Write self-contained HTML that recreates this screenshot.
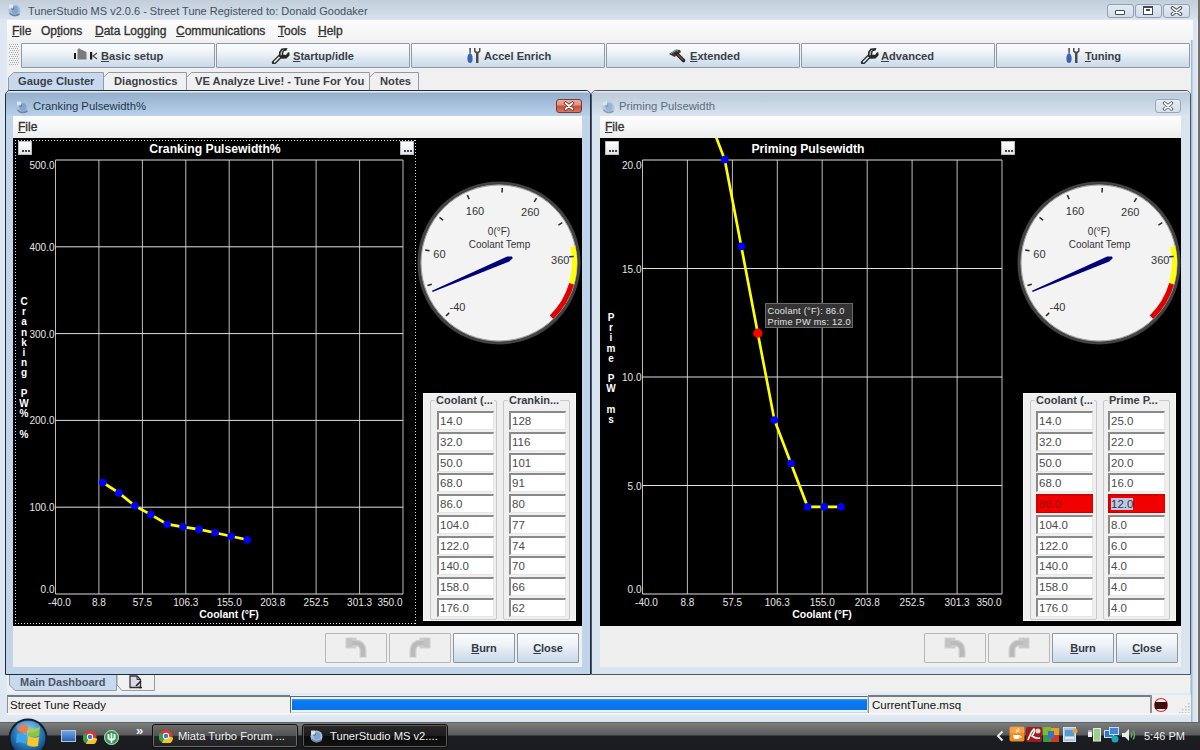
<!DOCTYPE html><html><head><meta charset="utf-8"><style>
*{box-sizing:border-box;margin:0;padding:0}
html,body{width:1200px;height:750px;overflow:hidden;background:#f0f0f0;font-family:"Liberation Sans",sans-serif;}
.a{position:absolute}
.u{text-decoration:underline;text-underline-offset:1px;text-decoration-thickness:1px}
.menu{top:24px;font-size:12px;color:#333;white-space:nowrap;-webkit-text-stroke:0.35px #333}
.tbtn{top:43px;height:25px;border:1px solid #8e9aa6;border-radius:1px;background:linear-gradient(#fafcfe 0%,#f0f4f8 35%,#dde7f1 65%,#c9d9ea 100%);font-weight:bold;font-size:11px;color:#3a3f46;line-height:23px;white-space:nowrap}
.tab{top:72px;height:19px;font-weight:bold;font-size:11px;color:#3a3f46;line-height:18px;white-space:nowrap}
.wmenu{font-size:12px;color:#333;white-space:nowrap;-webkit-text-stroke:0.35px #333}
.btn{top:633px;height:30px;border:1px solid #8a96a2;border-radius:1px;font-weight:bold;font-size:11px;letter-spacing:-0.1px;color:#333a42;text-align:center;line-height:29px;background:linear-gradient(#fafcfe 0%,#f0f4f8 35%,#dde7f1 65%,#c9d9ea 100%)}
.btnd{background:#efefef;border-color:#b4b8bc}
.cell{height:19px;background:#fff;border-top:2px solid #8a8a8a;border-left:2px solid #8a8a8a;border-right:1px solid #e6e6e6;border-bottom:1px solid #e6e6e6;font-size:11.5px;color:#4a4a4a;line-height:16px;padding-left:1px;white-space:nowrap;overflow:hidden}
.gb{border:1px solid #c9c9c9;border-radius:2px}
.gt{font-size:11px;font-weight:bold;color:#3a3f46;background:#efefef;white-space:nowrap;padding:0 1px}
.tw{font-family:"Liberation Sans",sans-serif}
</style></head><body>
<div class="a" style="left:0;top:0;width:1200px;height:20px;background:linear-gradient(#c2cfdb,#d0dce8 14px,#d6e2ec 19px,#e6edf3 20px)"></div>
<svg class="a" style="left:6px;top:2px;opacity:1" width="16" height="16" viewBox="0 0 16 16"><ellipse cx="8.5" cy="8.5" rx="6" ry="6" fill="#a9c0dc"/><ellipse cx="9" cy="8" rx="3.5" ry="4" fill="#7ea3d6"/><path d="M3.5 11 Q8 15.5 13.5 12" stroke="#6f7f95" stroke-width="1.6" fill="none"/><circle cx="6.5" cy="6.5" r="1.3" fill="#55677f"/><rect x="3" y="2.5" width="4" height="4" fill="#e6ece6" opacity="0.9"/></svg>
<div class="a" style="left:28px;top:5px;font-size:11px;color:#46505c;white-space:nowrap">TunerStudio MS v2.0.6 - Street Tune Registered to: Donald Goodaker</div>
<div class="a" style="left:1107px;top:4px;width:27px;height:14px;border:1px solid #93a1b0;border-radius:3px;background:linear-gradient(#e3eaf2,#d2dde9)"></div>
<div class="a" style="left:1135px;top:4px;width:27px;height:14px;border:1px solid #93a1b0;border-radius:3px;background:linear-gradient(#e3eaf2,#d2dde9)"></div>
<div class="a" style="left:1163px;top:4px;width:27px;height:14px;border:1px solid #93a1b0;border-radius:3px;background:linear-gradient(#e3eaf2,#d2dde9)"></div>
<div class="a" style="left:1115px;top:10px;width:10px;height:5px;border:1px solid #3e4a58;border-radius:1px;background:#fff"></div>
<div class="a" style="left:1143px;top:6px;width:10px;height:9px;border:1px solid #3e4a58;border-top-width:2px;background:#fff"><div style="margin:1px 2px;width:4px;height:2px;background:#3e4a58"></div></div>
<svg class="a" style="left:1170px;top:6px" width="13" height="10" viewBox="0 0 13 10"><path d="M2.5 1.8 L10.5 8.2 M10.5 1.8 L2.5 8.2" stroke="#3e4a58" stroke-width="3.4" stroke-linecap="round"/><path d="M2.5 1.8 L10.5 8.2 M10.5 1.8 L2.5 8.2" stroke="#fff" stroke-width="1.6" stroke-linecap="round"/></svg>
<div class="a" style="left:0;top:20px;width:7px;height:702px;background:#dde8f3"></div>
<div class="a" style="left:1191px;top:20px;width:9px;height:702px;background:linear-gradient(to right,#aab8c8 0px,#aab8c8 1px,#d8e6f4 2px,#d8e6f4 6px,#f4f4f4 7px)"></div>
<div class="a" style="left:1198px;top:0px;width:2px;height:722px;background:#77706a"></div>
<div class="a" style="left:7px;top:20px;width:1186px;height:20px;background:linear-gradient(#fcfcfc,#f4f4f4)"></div>
<div class="a menu" style="left:12px"><span class="u">F</span>ile</div>
<div class="a menu" style="left:41px">Op<span class="u">t</span>ions</div>
<div class="a menu" style="left:95px"><span class="u">D</span>ata Logging</div>
<div class="a menu" style="left:176px"><span class="u">C</span>ommunications</div>
<div class="a menu" style="left:278px"><span class="u">T</span>ools</div>
<div class="a menu" style="left:318px"><span class="u">H</span>elp</div>
<svg class="a" style="left:9px;top:44px" width="11" height="23"><rect x="0" y="0" width="1" height="1" fill="#a8aeb6"/><rect x="1" y="2" width="1" height="1" fill="#a8aeb6"/><rect x="0" y="4" width="1" height="1" fill="#a8aeb6"/><rect x="1" y="6" width="1" height="1" fill="#a8aeb6"/><rect x="0" y="8" width="1" height="1" fill="#a8aeb6"/><rect x="1" y="10" width="1" height="1" fill="#a8aeb6"/><rect x="0" y="12" width="1" height="1" fill="#a8aeb6"/><rect x="1" y="14" width="1" height="1" fill="#a8aeb6"/><rect x="0" y="16" width="1" height="1" fill="#a8aeb6"/><rect x="1" y="18" width="1" height="1" fill="#a8aeb6"/><rect x="0" y="20" width="1" height="1" fill="#a8aeb6"/><rect x="2" y="0" width="1" height="1" fill="#a8aeb6"/><rect x="3" y="2" width="1" height="1" fill="#a8aeb6"/><rect x="2" y="4" width="1" height="1" fill="#a8aeb6"/><rect x="3" y="6" width="1" height="1" fill="#a8aeb6"/><rect x="2" y="8" width="1" height="1" fill="#a8aeb6"/><rect x="3" y="10" width="1" height="1" fill="#a8aeb6"/><rect x="2" y="12" width="1" height="1" fill="#a8aeb6"/><rect x="3" y="14" width="1" height="1" fill="#a8aeb6"/><rect x="2" y="16" width="1" height="1" fill="#a8aeb6"/><rect x="3" y="18" width="1" height="1" fill="#a8aeb6"/><rect x="2" y="20" width="1" height="1" fill="#a8aeb6"/><rect x="4" y="0" width="1" height="1" fill="#a8aeb6"/><rect x="5" y="2" width="1" height="1" fill="#a8aeb6"/><rect x="4" y="4" width="1" height="1" fill="#a8aeb6"/><rect x="5" y="6" width="1" height="1" fill="#a8aeb6"/><rect x="4" y="8" width="1" height="1" fill="#a8aeb6"/><rect x="5" y="10" width="1" height="1" fill="#a8aeb6"/><rect x="4" y="12" width="1" height="1" fill="#a8aeb6"/><rect x="5" y="14" width="1" height="1" fill="#a8aeb6"/><rect x="4" y="16" width="1" height="1" fill="#a8aeb6"/><rect x="5" y="18" width="1" height="1" fill="#a8aeb6"/><rect x="4" y="20" width="1" height="1" fill="#a8aeb6"/><rect x="6" y="0" width="1" height="1" fill="#a8aeb6"/><rect x="7" y="2" width="1" height="1" fill="#a8aeb6"/><rect x="6" y="4" width="1" height="1" fill="#a8aeb6"/><rect x="7" y="6" width="1" height="1" fill="#a8aeb6"/><rect x="6" y="8" width="1" height="1" fill="#a8aeb6"/><rect x="7" y="10" width="1" height="1" fill="#a8aeb6"/><rect x="6" y="12" width="1" height="1" fill="#a8aeb6"/><rect x="7" y="14" width="1" height="1" fill="#a8aeb6"/><rect x="6" y="16" width="1" height="1" fill="#a8aeb6"/><rect x="7" y="18" width="1" height="1" fill="#a8aeb6"/><rect x="6" y="20" width="1" height="1" fill="#a8aeb6"/><rect x="8" y="0" width="1" height="1" fill="#a8aeb6"/><rect x="9" y="2" width="1" height="1" fill="#a8aeb6"/><rect x="8" y="4" width="1" height="1" fill="#a8aeb6"/><rect x="9" y="6" width="1" height="1" fill="#a8aeb6"/><rect x="8" y="8" width="1" height="1" fill="#a8aeb6"/><rect x="9" y="10" width="1" height="1" fill="#a8aeb6"/><rect x="8" y="12" width="1" height="1" fill="#a8aeb6"/><rect x="9" y="14" width="1" height="1" fill="#a8aeb6"/><rect x="8" y="16" width="1" height="1" fill="#a8aeb6"/><rect x="9" y="18" width="1" height="1" fill="#a8aeb6"/><rect x="8" y="20" width="1" height="1" fill="#a8aeb6"/></svg>
<div class="a tbtn" style="left:21px;width:194px"></div>
<div class="a" style="left:101px;top:50px;font-weight:bold;font-size:11.1px;color:#3a3f46;white-space:nowrap"><span class="u">B</span>asic setup</div>
<div class="a tbtn" style="left:216px;width:194px"></div>
<div class="a" style="left:293px;top:50px;font-weight:bold;font-size:11.1px;color:#3a3f46;white-space:nowrap"><span class="u">S</span>tartup/idle</div>
<div class="a tbtn" style="left:411px;width:194px"></div>
<div class="a" style="left:484px;top:50px;font-weight:bold;font-size:11.1px;color:#3a3f46;white-space:nowrap">Accel Enrich</div>
<div class="a tbtn" style="left:606px;width:194px"></div>
<div class="a" style="left:690px;top:50px;font-weight:bold;font-size:11.1px;color:#3a3f46;white-space:nowrap"><span class="u">E</span>xtended</div>
<div class="a tbtn" style="left:801px;width:194px"></div>
<div class="a" style="left:881px;top:50px;font-weight:bold;font-size:11.1px;color:#3a3f46;white-space:nowrap"><span class="u">A</span>dvanced</div>
<div class="a tbtn" style="left:996px;width:194px"></div>
<div class="a" style="left:1085px;top:50px;font-weight:bold;font-size:11.1px;color:#3a3f46;white-space:nowrap"><span class="u">T</span>uning</div>
<svg class="a" style="left:72px;top:46px" width="28" height="16"><rect x="2" y="7" width="2" height="6" fill="#1a1a1a"/><path d="M5.5 13.5 L5.5 4 L7 2 L8 3 L14.5 6 L14.5 13.5Z" fill="#7a7a7a"/><rect x="18" y="6" width="2.2" height="7.5" fill="#1a1a1a"/><path d="M25 7 L21 10 L25 13" stroke="#444" stroke-width="1.1" fill="none"/></svg>
<svg class="a" style="left:271px;top:46px" width="22" height="18" viewBox="0 0 22 18"><path d="M3 16.5 L9.5 10" stroke="#2a2a2a" stroke-width="4.2" stroke-linecap="round"/><path d="M3.6 15.9 L9.5 10" stroke="#e4e4e4" stroke-width="1.6" stroke-linecap="round"/><path d="M8 10.5 L8 6 L10.5 2.5 L16.5 2 L15.5 4.5 L12.8 5.2 L12 8.5 L15 9 L17 6.3 L18.5 6.5 L18.5 9.5 L15.5 12.5 L10.5 12.8Z" fill="#262626"/><path d="M9.5 9.5 L9.6 6.5 L11.2 4 L13 3.6 L11.3 5.2 L10.8 9Z" fill="#bdbdbd"/></svg>
<svg class="a" style="left:860px;top:46px" width="22" height="18" viewBox="0 0 22 18"><path d="M3 16.5 L9.5 10" stroke="#2a2a2a" stroke-width="4.2" stroke-linecap="round"/><path d="M3.6 15.9 L9.5 10" stroke="#e4e4e4" stroke-width="1.6" stroke-linecap="round"/><path d="M8 10.5 L8 6 L10.5 2.5 L16.5 2 L15.5 4.5 L12.8 5.2 L12 8.5 L15 9 L17 6.3 L18.5 6.5 L18.5 9.5 L15.5 12.5 L10.5 12.8Z" fill="#262626"/><path d="M9.5 9.5 L9.6 6.5 L11.2 4 L13 3.6 L11.3 5.2 L10.8 9Z" fill="#bdbdbd"/></svg>
<svg class="a" style="left:467px;top:46px" width="16" height="18" viewBox="0 0 16 18"><path d="M2.2 2 L4 2 L3.8 7 L2.4 7Z" fill="#555"/><path d="M3 7 Q5.6 8 5.6 12.5 Q5.6 17 3 17 Q0.4 17 0.4 12.5 Q0.4 8 3 7Z" fill="#3d63b5"/><path d="M7 2 L7 5.5 L9 7.5 L9 17 L11.5 17 L11.5 7.5 L13.5 5.5 L13.5 2 L12 2 L12 5 L10.2 5.8 L8.5 5 L8.5 2Z" fill="#4a4a4a"/></svg>
<svg class="a" style="left:1066px;top:46px" width="16" height="18" viewBox="0 0 16 18"><path d="M2.2 2 L4 2 L3.8 7 L2.4 7Z" fill="#555"/><path d="M3 7 Q5.6 8 5.6 12.5 Q5.6 17 3 17 Q0.4 17 0.4 12.5 Q0.4 8 3 7Z" fill="#3d63b5"/><path d="M7 2 L7 5.5 L9 7.5 L9 17 L11.5 17 L11.5 7.5 L13.5 5.5 L13.5 2 L12 2 L12 5 L10.2 5.8 L8.5 5 L8.5 2Z" fill="#4a4a4a"/></svg>
<svg class="a" style="left:667px;top:48px" width="20" height="16" viewBox="0 0 20 16"><path d="M2 6 L9 1.5 L13 2 L14 4 L7.5 9Z" fill="#3c3c3c"/><path d="M4 5.5 L9 2.5 L11 3" stroke="#999" stroke-width="1" fill="none"/><path d="M10 6 L16.5 12.5" stroke="#222" stroke-width="3.6" stroke-linecap="round"/><path d="M10.2 6.2 L16.3 12.3" stroke="#8a4a44" stroke-width="1.4"/></svg>
<svg class="a" style="left:8px;top:72px" width="97" height="19"><path d="M0.5 19 L0.5 5.5 L5.5 0.5 L95.5 0.5 L95.5 19" fill="#c6d9ee" stroke="#8f9aa6"/></svg>
<svg class="a" style="left:103px;top:72px" width="85" height="19"><path d="M0.5 19 L0.5 5.5 L5.5 0.5 L83.5 0.5 L83.5 19" fill="#f0f0f0" stroke="#8f9aa6"/></svg>
<svg class="a" style="left:186px;top:72px" width="185" height="19"><path d="M0.5 19 L0.5 5.5 L5.5 0.5 L183.5 0.5 L183.5 19" fill="#f0f0f0" stroke="#8f9aa6"/></svg>
<svg class="a" style="left:369px;top:72px" width="51" height="19"><path d="M0.5 19 L0.5 5.5 L5.5 0.5 L49.5 0.5 L49.5 19" fill="#f0f0f0" stroke="#8f9aa6"/></svg>
<div class="a tab" style="left:18px;font-size:11.2px">Gauge Cluster</div>
<div class="a tab" style="left:114px;font-size:11.2px">Diagnostics</div>
<div class="a tab" style="left:195px;font-size:11.2px">VE Analyze Live! - Tune For You</div>
<div class="a tab" style="left:380px;font-size:11.2px">Notes</div>
<div class="a" style="left:5px;top:90px;width:586px;height:585px;border:1px solid #1d2a38;border-radius:5px 5px 0 0;background:#c0d4ea"></div>
<div class="a" style="left:6px;top:91px;width:584px;height:25px;border-radius:4px 4px 0 0;background:linear-gradient(#e6eef6 0px,#e6eef6 1px,#96b0cb 2px,#a4bed9 12px,#b5cde9 23px,#bcd2ea 25px)"></div>
<div class="a" style="left:591px;top:90px;width:600px;height:585px;border:1px solid #4e5864;border-radius:5px 5px 0 0;background:#d8e5f1"></div>
<div class="a" style="left:592px;top:91px;width:598px;height:25px;border-radius:4px 4px 0 0;background:linear-gradient(#e2e8ee 0px,#e2e8ee 1px,#c0cbd6 2px,#c4d3e2 10px,#d5e0ee 22px,#dae5f0 25px)"></div>
<svg class="a" style="left:14px;top:99px;opacity:0.95" width="16" height="16" viewBox="0 0 16 16"><ellipse cx="8.5" cy="8.5" rx="6" ry="6" fill="#a9c0dc"/><ellipse cx="9" cy="8" rx="3.5" ry="4" fill="#7ea3d6"/><path d="M3.5 11 Q8 15.5 13.5 12" stroke="#6f7f95" stroke-width="1.6" fill="none"/><circle cx="6.5" cy="6.5" r="1.3" fill="#55677f"/><rect x="3" y="2.5" width="4" height="4" fill="#e6ece6" opacity="0.9"/></svg>
<div class="a" style="left:33px;top:100px;font-size:11.3px;color:#24364c;white-space:nowrap">Cranking Pulsewidth%</div>
<div class="a" style="left:556px;top:99px;width:26px;height:14px;border:1px solid #7a3a30;border-radius:3px;background:linear-gradient(#eab0a4 0%,#e0907e 40%,#c9503c 55%,#d47a66 100%)"></div><svg class="a" style="left:563px;top:101px" width="12" height="10"><path d="M2.5 2 L9.5 8 M9.5 2 L2.5 8" stroke="#6a2a20" stroke-width="3.4" stroke-linecap="round"/><path d="M2.5 2 L9.5 8 M9.5 2 L2.5 8" stroke="#fff" stroke-width="1.8" stroke-linecap="round"/></svg>
<div class="a" style="left:13px;top:116px;width:569px;height:22px;background:linear-gradient(#fdfdfd 0%,#f7f7f7 50%,#ececec 100%)"></div>
<div class="a wmenu" style="left:18px;top:120px"><span class="u">F</span>ile</div>
<div class="a" style="left:13px;top:626px;width:569px;height:41px;background:#efefef"></div>
<svg class="a" style="left:13px;top:138px" width="569" height="488" viewBox="13 138 569 488" font-family="Liberation Sans, sans-serif"><rect x="13" y="138" width="569" height="488" fill="#000"/><line x1="55.5" y1="160" x2="55.5" y2="594" stroke="#bdbdbd" stroke-width="1"/><text x="59.5" y="606" fill="#e6e6e6" font-size="10" text-anchor="middle">-40.0</text><line x1="98.9" y1="160" x2="98.9" y2="594" stroke="#bdbdbd" stroke-width="1"/><text x="98.9" y="606" fill="#e6e6e6" font-size="10" text-anchor="middle">8.8</text><line x1="142.4" y1="160" x2="142.4" y2="594" stroke="#bdbdbd" stroke-width="1"/><text x="142.4" y="606" fill="#e6e6e6" font-size="10" text-anchor="middle">57.5</text><line x1="185.8" y1="160" x2="185.8" y2="594" stroke="#bdbdbd" stroke-width="1"/><text x="185.8" y="606" fill="#e6e6e6" font-size="10" text-anchor="middle">106.3</text><line x1="229.2" y1="160" x2="229.2" y2="594" stroke="#bdbdbd" stroke-width="1"/><text x="229.2" y="606" fill="#e6e6e6" font-size="10" text-anchor="middle">155.0</text><line x1="272.7" y1="160" x2="272.7" y2="594" stroke="#bdbdbd" stroke-width="1"/><text x="272.7" y="606" fill="#e6e6e6" font-size="10" text-anchor="middle">203.8</text><line x1="316.1" y1="160" x2="316.1" y2="594" stroke="#bdbdbd" stroke-width="1"/><text x="316.1" y="606" fill="#e6e6e6" font-size="10" text-anchor="middle">252.5</text><line x1="359.6" y1="160" x2="359.6" y2="594" stroke="#bdbdbd" stroke-width="1"/><text x="359.6" y="606" fill="#e6e6e6" font-size="10" text-anchor="middle">301.3</text><line x1="403.0" y1="160" x2="403.0" y2="594" stroke="#bdbdbd" stroke-width="1"/><text x="390.0" y="606" fill="#e6e6e6" font-size="10" text-anchor="middle">350.0</text><line x1="55.5" y1="594.0" x2="403" y2="594.0" stroke="#e0e0e0" stroke-width="1"/><text x="54.5" y="593.0" fill="#e6e6e6" font-size="10" text-anchor="end">0.0</text><line x1="55.5" y1="507.2" x2="403" y2="507.2" stroke="#e0e0e0" stroke-width="1"/><text x="54.5" y="511.2" fill="#e6e6e6" font-size="10" text-anchor="end">100.0</text><line x1="55.5" y1="420.4" x2="403" y2="420.4" stroke="#e0e0e0" stroke-width="1"/><text x="54.5" y="424.4" fill="#e6e6e6" font-size="10" text-anchor="end">200.0</text><line x1="55.5" y1="333.6" x2="403" y2="333.6" stroke="#e0e0e0" stroke-width="1"/><text x="54.5" y="337.6" fill="#e6e6e6" font-size="10" text-anchor="end">300.0</text><line x1="55.5" y1="246.8" x2="403" y2="246.8" stroke="#e0e0e0" stroke-width="1"/><text x="54.5" y="250.8" fill="#e6e6e6" font-size="10" text-anchor="end">400.0</text><line x1="55.5" y1="160.0" x2="403" y2="160.0" stroke="#e0e0e0" stroke-width="1"/><text x="54.5" y="169.0" fill="#e6e6e6" font-size="10" text-anchor="end">500.0</text><text x="215" y="152.8" fill="#fff" font-size="12.2" font-weight="bold" text-anchor="middle">Cranking Pulsewidth%</text><text x="229" y="618" fill="#fff" font-size="10.5" font-weight="bold" text-anchor="middle">Coolant (°F)</text><text x="24" y="305.0" fill="#fff" font-size="10" font-weight="bold" text-anchor="middle">C</text><text x="24" y="315.2" fill="#fff" font-size="10" font-weight="bold" text-anchor="middle">r</text><text x="24" y="325.4" fill="#fff" font-size="10" font-weight="bold" text-anchor="middle">a</text><text x="24" y="335.6" fill="#fff" font-size="10" font-weight="bold" text-anchor="middle">n</text><text x="24" y="345.8" fill="#fff" font-size="10" font-weight="bold" text-anchor="middle">k</text><text x="24" y="356.0" fill="#fff" font-size="10" font-weight="bold" text-anchor="middle">i</text><text x="24" y="366.2" fill="#fff" font-size="10" font-weight="bold" text-anchor="middle">n</text><text x="24" y="376.4" fill="#fff" font-size="10" font-weight="bold" text-anchor="middle">g</text><text x="24" y="396.8" fill="#fff" font-size="10" font-weight="bold" text-anchor="middle">P</text><text x="24" y="407.0" fill="#fff" font-size="10" font-weight="bold" text-anchor="middle">W</text><text x="24" y="417.2" fill="#fff" font-size="10" font-weight="bold" text-anchor="middle">%</text><text x="24" y="437.6" fill="#fff" font-size="10" font-weight="bold" text-anchor="middle">%</text><clipPath id="c13"><rect x="13" y="138" width="569" height="488"/></clipPath><polyline clip-path="url(#c13)" points="102.8,482.5 118.9,492.9 134.9,505.9 150.9,514.6 167.0,524.2 183.0,526.8 199.0,529.4 215.1,532.8 231.1,536.3 247.2,539.8" fill="none" stroke="#ffff00" stroke-width="2.7"/><circle cx="102.8" cy="482.5" r="3.8" fill="#0000ff"/><circle cx="118.9" cy="492.9" r="3.8" fill="#0000ff"/><circle cx="134.9" cy="505.9" r="3.8" fill="#0000ff"/><circle cx="150.9" cy="514.6" r="3.8" fill="#0000ff"/><circle cx="167.0" cy="524.2" r="3.8" fill="#0000ff"/><circle cx="183.0" cy="526.8" r="3.8" fill="#0000ff"/><circle cx="199.0" cy="529.4" r="3.8" fill="#0000ff"/><circle cx="215.1" cy="532.8" r="3.8" fill="#0000ff"/><circle cx="231.1" cy="536.3" r="3.8" fill="#0000ff"/><circle cx="247.2" cy="539.8" r="3.8" fill="#0000ff"/><rect x="15" y="140" width="1" height="1" fill="#e0e0e0"/><rect x="15" y="623" width="1" height="1" fill="#e0e0e0"/><rect x="18" y="140" width="1" height="1" fill="#e0e0e0"/><rect x="18" y="623" width="1" height="1" fill="#e0e0e0"/><rect x="21" y="140" width="1" height="1" fill="#e0e0e0"/><rect x="21" y="623" width="1" height="1" fill="#e0e0e0"/><rect x="24" y="140" width="1" height="1" fill="#e0e0e0"/><rect x="24" y="623" width="1" height="1" fill="#e0e0e0"/><rect x="27" y="140" width="1" height="1" fill="#e0e0e0"/><rect x="27" y="623" width="1" height="1" fill="#e0e0e0"/><rect x="30" y="140" width="1" height="1" fill="#e0e0e0"/><rect x="30" y="623" width="1" height="1" fill="#e0e0e0"/><rect x="33" y="140" width="1" height="1" fill="#e0e0e0"/><rect x="33" y="623" width="1" height="1" fill="#e0e0e0"/><rect x="36" y="140" width="1" height="1" fill="#e0e0e0"/><rect x="36" y="623" width="1" height="1" fill="#e0e0e0"/><rect x="39" y="140" width="1" height="1" fill="#e0e0e0"/><rect x="39" y="623" width="1" height="1" fill="#e0e0e0"/><rect x="42" y="140" width="1" height="1" fill="#e0e0e0"/><rect x="42" y="623" width="1" height="1" fill="#e0e0e0"/><rect x="45" y="140" width="1" height="1" fill="#e0e0e0"/><rect x="45" y="623" width="1" height="1" fill="#e0e0e0"/><rect x="48" y="140" width="1" height="1" fill="#e0e0e0"/><rect x="48" y="623" width="1" height="1" fill="#e0e0e0"/><rect x="51" y="140" width="1" height="1" fill="#e0e0e0"/><rect x="51" y="623" width="1" height="1" fill="#e0e0e0"/><rect x="54" y="140" width="1" height="1" fill="#e0e0e0"/><rect x="54" y="623" width="1" height="1" fill="#e0e0e0"/><rect x="57" y="140" width="1" height="1" fill="#e0e0e0"/><rect x="57" y="623" width="1" height="1" fill="#e0e0e0"/><rect x="60" y="140" width="1" height="1" fill="#e0e0e0"/><rect x="60" y="623" width="1" height="1" fill="#e0e0e0"/><rect x="63" y="140" width="1" height="1" fill="#e0e0e0"/><rect x="63" y="623" width="1" height="1" fill="#e0e0e0"/><rect x="66" y="140" width="1" height="1" fill="#e0e0e0"/><rect x="66" y="623" width="1" height="1" fill="#e0e0e0"/><rect x="69" y="140" width="1" height="1" fill="#e0e0e0"/><rect x="69" y="623" width="1" height="1" fill="#e0e0e0"/><rect x="72" y="140" width="1" height="1" fill="#e0e0e0"/><rect x="72" y="623" width="1" height="1" fill="#e0e0e0"/><rect x="75" y="140" width="1" height="1" fill="#e0e0e0"/><rect x="75" y="623" width="1" height="1" fill="#e0e0e0"/><rect x="78" y="140" width="1" height="1" fill="#e0e0e0"/><rect x="78" y="623" width="1" height="1" fill="#e0e0e0"/><rect x="81" y="140" width="1" height="1" fill="#e0e0e0"/><rect x="81" y="623" width="1" height="1" fill="#e0e0e0"/><rect x="84" y="140" width="1" height="1" fill="#e0e0e0"/><rect x="84" y="623" width="1" height="1" fill="#e0e0e0"/><rect x="87" y="140" width="1" height="1" fill="#e0e0e0"/><rect x="87" y="623" width="1" height="1" fill="#e0e0e0"/><rect x="90" y="140" width="1" height="1" fill="#e0e0e0"/><rect x="90" y="623" width="1" height="1" fill="#e0e0e0"/><rect x="93" y="140" width="1" height="1" fill="#e0e0e0"/><rect x="93" y="623" width="1" height="1" fill="#e0e0e0"/><rect x="96" y="140" width="1" height="1" fill="#e0e0e0"/><rect x="96" y="623" width="1" height="1" fill="#e0e0e0"/><rect x="99" y="140" width="1" height="1" fill="#e0e0e0"/><rect x="99" y="623" width="1" height="1" fill="#e0e0e0"/><rect x="102" y="140" width="1" height="1" fill="#e0e0e0"/><rect x="102" y="623" width="1" height="1" fill="#e0e0e0"/><rect x="105" y="140" width="1" height="1" fill="#e0e0e0"/><rect x="105" y="623" width="1" height="1" fill="#e0e0e0"/><rect x="108" y="140" width="1" height="1" fill="#e0e0e0"/><rect x="108" y="623" width="1" height="1" fill="#e0e0e0"/><rect x="111" y="140" width="1" height="1" fill="#e0e0e0"/><rect x="111" y="623" width="1" height="1" fill="#e0e0e0"/><rect x="114" y="140" width="1" height="1" fill="#e0e0e0"/><rect x="114" y="623" width="1" height="1" fill="#e0e0e0"/><rect x="117" y="140" width="1" height="1" fill="#e0e0e0"/><rect x="117" y="623" width="1" height="1" fill="#e0e0e0"/><rect x="120" y="140" width="1" height="1" fill="#e0e0e0"/><rect x="120" y="623" width="1" height="1" fill="#e0e0e0"/><rect x="123" y="140" width="1" height="1" fill="#e0e0e0"/><rect x="123" y="623" width="1" height="1" fill="#e0e0e0"/><rect x="126" y="140" width="1" height="1" fill="#e0e0e0"/><rect x="126" y="623" width="1" height="1" fill="#e0e0e0"/><rect x="129" y="140" width="1" height="1" fill="#e0e0e0"/><rect x="129" y="623" width="1" height="1" fill="#e0e0e0"/><rect x="132" y="140" width="1" height="1" fill="#e0e0e0"/><rect x="132" y="623" width="1" height="1" fill="#e0e0e0"/><rect x="135" y="140" width="1" height="1" fill="#e0e0e0"/><rect x="135" y="623" width="1" height="1" fill="#e0e0e0"/><rect x="138" y="140" width="1" height="1" fill="#e0e0e0"/><rect x="138" y="623" width="1" height="1" fill="#e0e0e0"/><rect x="141" y="140" width="1" height="1" fill="#e0e0e0"/><rect x="141" y="623" width="1" height="1" fill="#e0e0e0"/><rect x="144" y="140" width="1" height="1" fill="#e0e0e0"/><rect x="144" y="623" width="1" height="1" fill="#e0e0e0"/><rect x="147" y="140" width="1" height="1" fill="#e0e0e0"/><rect x="147" y="623" width="1" height="1" fill="#e0e0e0"/><rect x="150" y="140" width="1" height="1" fill="#e0e0e0"/><rect x="150" y="623" width="1" height="1" fill="#e0e0e0"/><rect x="153" y="140" width="1" height="1" fill="#e0e0e0"/><rect x="153" y="623" width="1" height="1" fill="#e0e0e0"/><rect x="156" y="140" width="1" height="1" fill="#e0e0e0"/><rect x="156" y="623" width="1" height="1" fill="#e0e0e0"/><rect x="159" y="140" width="1" height="1" fill="#e0e0e0"/><rect x="159" y="623" width="1" height="1" fill="#e0e0e0"/><rect x="162" y="140" width="1" height="1" fill="#e0e0e0"/><rect x="162" y="623" width="1" height="1" fill="#e0e0e0"/><rect x="165" y="140" width="1" height="1" fill="#e0e0e0"/><rect x="165" y="623" width="1" height="1" fill="#e0e0e0"/><rect x="168" y="140" width="1" height="1" fill="#e0e0e0"/><rect x="168" y="623" width="1" height="1" fill="#e0e0e0"/><rect x="171" y="140" width="1" height="1" fill="#e0e0e0"/><rect x="171" y="623" width="1" height="1" fill="#e0e0e0"/><rect x="174" y="140" width="1" height="1" fill="#e0e0e0"/><rect x="174" y="623" width="1" height="1" fill="#e0e0e0"/><rect x="177" y="140" width="1" height="1" fill="#e0e0e0"/><rect x="177" y="623" width="1" height="1" fill="#e0e0e0"/><rect x="180" y="140" width="1" height="1" fill="#e0e0e0"/><rect x="180" y="623" width="1" height="1" fill="#e0e0e0"/><rect x="183" y="140" width="1" height="1" fill="#e0e0e0"/><rect x="183" y="623" width="1" height="1" fill="#e0e0e0"/><rect x="186" y="140" width="1" height="1" fill="#e0e0e0"/><rect x="186" y="623" width="1" height="1" fill="#e0e0e0"/><rect x="189" y="140" width="1" height="1" fill="#e0e0e0"/><rect x="189" y="623" width="1" height="1" fill="#e0e0e0"/><rect x="192" y="140" width="1" height="1" fill="#e0e0e0"/><rect x="192" y="623" width="1" height="1" fill="#e0e0e0"/><rect x="195" y="140" width="1" height="1" fill="#e0e0e0"/><rect x="195" y="623" width="1" height="1" fill="#e0e0e0"/><rect x="198" y="140" width="1" height="1" fill="#e0e0e0"/><rect x="198" y="623" width="1" height="1" fill="#e0e0e0"/><rect x="201" y="140" width="1" height="1" fill="#e0e0e0"/><rect x="201" y="623" width="1" height="1" fill="#e0e0e0"/><rect x="204" y="140" width="1" height="1" fill="#e0e0e0"/><rect x="204" y="623" width="1" height="1" fill="#e0e0e0"/><rect x="207" y="140" width="1" height="1" fill="#e0e0e0"/><rect x="207" y="623" width="1" height="1" fill="#e0e0e0"/><rect x="210" y="140" width="1" height="1" fill="#e0e0e0"/><rect x="210" y="623" width="1" height="1" fill="#e0e0e0"/><rect x="213" y="140" width="1" height="1" fill="#e0e0e0"/><rect x="213" y="623" width="1" height="1" fill="#e0e0e0"/><rect x="216" y="140" width="1" height="1" fill="#e0e0e0"/><rect x="216" y="623" width="1" height="1" fill="#e0e0e0"/><rect x="219" y="140" width="1" height="1" fill="#e0e0e0"/><rect x="219" y="623" width="1" height="1" fill="#e0e0e0"/><rect x="222" y="140" width="1" height="1" fill="#e0e0e0"/><rect x="222" y="623" width="1" height="1" fill="#e0e0e0"/><rect x="225" y="140" width="1" height="1" fill="#e0e0e0"/><rect x="225" y="623" width="1" height="1" fill="#e0e0e0"/><rect x="228" y="140" width="1" height="1" fill="#e0e0e0"/><rect x="228" y="623" width="1" height="1" fill="#e0e0e0"/><rect x="231" y="140" width="1" height="1" fill="#e0e0e0"/><rect x="231" y="623" width="1" height="1" fill="#e0e0e0"/><rect x="234" y="140" width="1" height="1" fill="#e0e0e0"/><rect x="234" y="623" width="1" height="1" fill="#e0e0e0"/><rect x="237" y="140" width="1" height="1" fill="#e0e0e0"/><rect x="237" y="623" width="1" height="1" fill="#e0e0e0"/><rect x="240" y="140" width="1" height="1" fill="#e0e0e0"/><rect x="240" y="623" width="1" height="1" fill="#e0e0e0"/><rect x="243" y="140" width="1" height="1" fill="#e0e0e0"/><rect x="243" y="623" width="1" height="1" fill="#e0e0e0"/><rect x="246" y="140" width="1" height="1" fill="#e0e0e0"/><rect x="246" y="623" width="1" height="1" fill="#e0e0e0"/><rect x="249" y="140" width="1" height="1" fill="#e0e0e0"/><rect x="249" y="623" width="1" height="1" fill="#e0e0e0"/><rect x="252" y="140" width="1" height="1" fill="#e0e0e0"/><rect x="252" y="623" width="1" height="1" fill="#e0e0e0"/><rect x="255" y="140" width="1" height="1" fill="#e0e0e0"/><rect x="255" y="623" width="1" height="1" fill="#e0e0e0"/><rect x="258" y="140" width="1" height="1" fill="#e0e0e0"/><rect x="258" y="623" width="1" height="1" fill="#e0e0e0"/><rect x="261" y="140" width="1" height="1" fill="#e0e0e0"/><rect x="261" y="623" width="1" height="1" fill="#e0e0e0"/><rect x="264" y="140" width="1" height="1" fill="#e0e0e0"/><rect x="264" y="623" width="1" height="1" fill="#e0e0e0"/><rect x="267" y="140" width="1" height="1" fill="#e0e0e0"/><rect x="267" y="623" width="1" height="1" fill="#e0e0e0"/><rect x="270" y="140" width="1" height="1" fill="#e0e0e0"/><rect x="270" y="623" width="1" height="1" fill="#e0e0e0"/><rect x="273" y="140" width="1" height="1" fill="#e0e0e0"/><rect x="273" y="623" width="1" height="1" fill="#e0e0e0"/><rect x="276" y="140" width="1" height="1" fill="#e0e0e0"/><rect x="276" y="623" width="1" height="1" fill="#e0e0e0"/><rect x="279" y="140" width="1" height="1" fill="#e0e0e0"/><rect x="279" y="623" width="1" height="1" fill="#e0e0e0"/><rect x="282" y="140" width="1" height="1" fill="#e0e0e0"/><rect x="282" y="623" width="1" height="1" fill="#e0e0e0"/><rect x="285" y="140" width="1" height="1" fill="#e0e0e0"/><rect x="285" y="623" width="1" height="1" fill="#e0e0e0"/><rect x="288" y="140" width="1" height="1" fill="#e0e0e0"/><rect x="288" y="623" width="1" height="1" fill="#e0e0e0"/><rect x="291" y="140" width="1" height="1" fill="#e0e0e0"/><rect x="291" y="623" width="1" height="1" fill="#e0e0e0"/><rect x="294" y="140" width="1" height="1" fill="#e0e0e0"/><rect x="294" y="623" width="1" height="1" fill="#e0e0e0"/><rect x="297" y="140" width="1" height="1" fill="#e0e0e0"/><rect x="297" y="623" width="1" height="1" fill="#e0e0e0"/><rect x="300" y="140" width="1" height="1" fill="#e0e0e0"/><rect x="300" y="623" width="1" height="1" fill="#e0e0e0"/><rect x="303" y="140" width="1" height="1" fill="#e0e0e0"/><rect x="303" y="623" width="1" height="1" fill="#e0e0e0"/><rect x="306" y="140" width="1" height="1" fill="#e0e0e0"/><rect x="306" y="623" width="1" height="1" fill="#e0e0e0"/><rect x="309" y="140" width="1" height="1" fill="#e0e0e0"/><rect x="309" y="623" width="1" height="1" fill="#e0e0e0"/><rect x="312" y="140" width="1" height="1" fill="#e0e0e0"/><rect x="312" y="623" width="1" height="1" fill="#e0e0e0"/><rect x="315" y="140" width="1" height="1" fill="#e0e0e0"/><rect x="315" y="623" width="1" height="1" fill="#e0e0e0"/><rect x="318" y="140" width="1" height="1" fill="#e0e0e0"/><rect x="318" y="623" width="1" height="1" fill="#e0e0e0"/><rect x="321" y="140" width="1" height="1" fill="#e0e0e0"/><rect x="321" y="623" width="1" height="1" fill="#e0e0e0"/><rect x="324" y="140" width="1" height="1" fill="#e0e0e0"/><rect x="324" y="623" width="1" height="1" fill="#e0e0e0"/><rect x="327" y="140" width="1" height="1" fill="#e0e0e0"/><rect x="327" y="623" width="1" height="1" fill="#e0e0e0"/><rect x="330" y="140" width="1" height="1" fill="#e0e0e0"/><rect x="330" y="623" width="1" height="1" fill="#e0e0e0"/><rect x="333" y="140" width="1" height="1" fill="#e0e0e0"/><rect x="333" y="623" width="1" height="1" fill="#e0e0e0"/><rect x="336" y="140" width="1" height="1" fill="#e0e0e0"/><rect x="336" y="623" width="1" height="1" fill="#e0e0e0"/><rect x="339" y="140" width="1" height="1" fill="#e0e0e0"/><rect x="339" y="623" width="1" height="1" fill="#e0e0e0"/><rect x="342" y="140" width="1" height="1" fill="#e0e0e0"/><rect x="342" y="623" width="1" height="1" fill="#e0e0e0"/><rect x="345" y="140" width="1" height="1" fill="#e0e0e0"/><rect x="345" y="623" width="1" height="1" fill="#e0e0e0"/><rect x="348" y="140" width="1" height="1" fill="#e0e0e0"/><rect x="348" y="623" width="1" height="1" fill="#e0e0e0"/><rect x="351" y="140" width="1" height="1" fill="#e0e0e0"/><rect x="351" y="623" width="1" height="1" fill="#e0e0e0"/><rect x="354" y="140" width="1" height="1" fill="#e0e0e0"/><rect x="354" y="623" width="1" height="1" fill="#e0e0e0"/><rect x="357" y="140" width="1" height="1" fill="#e0e0e0"/><rect x="357" y="623" width="1" height="1" fill="#e0e0e0"/><rect x="360" y="140" width="1" height="1" fill="#e0e0e0"/><rect x="360" y="623" width="1" height="1" fill="#e0e0e0"/><rect x="363" y="140" width="1" height="1" fill="#e0e0e0"/><rect x="363" y="623" width="1" height="1" fill="#e0e0e0"/><rect x="366" y="140" width="1" height="1" fill="#e0e0e0"/><rect x="366" y="623" width="1" height="1" fill="#e0e0e0"/><rect x="369" y="140" width="1" height="1" fill="#e0e0e0"/><rect x="369" y="623" width="1" height="1" fill="#e0e0e0"/><rect x="372" y="140" width="1" height="1" fill="#e0e0e0"/><rect x="372" y="623" width="1" height="1" fill="#e0e0e0"/><rect x="375" y="140" width="1" height="1" fill="#e0e0e0"/><rect x="375" y="623" width="1" height="1" fill="#e0e0e0"/><rect x="378" y="140" width="1" height="1" fill="#e0e0e0"/><rect x="378" y="623" width="1" height="1" fill="#e0e0e0"/><rect x="381" y="140" width="1" height="1" fill="#e0e0e0"/><rect x="381" y="623" width="1" height="1" fill="#e0e0e0"/><rect x="384" y="140" width="1" height="1" fill="#e0e0e0"/><rect x="384" y="623" width="1" height="1" fill="#e0e0e0"/><rect x="387" y="140" width="1" height="1" fill="#e0e0e0"/><rect x="387" y="623" width="1" height="1" fill="#e0e0e0"/><rect x="390" y="140" width="1" height="1" fill="#e0e0e0"/><rect x="390" y="623" width="1" height="1" fill="#e0e0e0"/><rect x="393" y="140" width="1" height="1" fill="#e0e0e0"/><rect x="393" y="623" width="1" height="1" fill="#e0e0e0"/><rect x="396" y="140" width="1" height="1" fill="#e0e0e0"/><rect x="396" y="623" width="1" height="1" fill="#e0e0e0"/><rect x="399" y="140" width="1" height="1" fill="#e0e0e0"/><rect x="399" y="623" width="1" height="1" fill="#e0e0e0"/><rect x="402" y="140" width="1" height="1" fill="#e0e0e0"/><rect x="402" y="623" width="1" height="1" fill="#e0e0e0"/><rect x="405" y="140" width="1" height="1" fill="#e0e0e0"/><rect x="405" y="623" width="1" height="1" fill="#e0e0e0"/><rect x="408" y="140" width="1" height="1" fill="#e0e0e0"/><rect x="408" y="623" width="1" height="1" fill="#e0e0e0"/><rect x="411" y="140" width="1" height="1" fill="#e0e0e0"/><rect x="411" y="623" width="1" height="1" fill="#e0e0e0"/><rect x="414" y="140" width="1" height="1" fill="#e0e0e0"/><rect x="414" y="623" width="1" height="1" fill="#e0e0e0"/><rect x="15" y="140" width="1" height="1" fill="#e0e0e0"/><rect x="415" y="140" width="1" height="1" fill="#e0e0e0"/><rect x="15" y="143" width="1" height="1" fill="#e0e0e0"/><rect x="415" y="143" width="1" height="1" fill="#e0e0e0"/><rect x="15" y="146" width="1" height="1" fill="#e0e0e0"/><rect x="415" y="146" width="1" height="1" fill="#e0e0e0"/><rect x="15" y="149" width="1" height="1" fill="#e0e0e0"/><rect x="415" y="149" width="1" height="1" fill="#e0e0e0"/><rect x="15" y="152" width="1" height="1" fill="#e0e0e0"/><rect x="415" y="152" width="1" height="1" fill="#e0e0e0"/><rect x="15" y="155" width="1" height="1" fill="#e0e0e0"/><rect x="415" y="155" width="1" height="1" fill="#e0e0e0"/><rect x="15" y="158" width="1" height="1" fill="#e0e0e0"/><rect x="415" y="158" width="1" height="1" fill="#e0e0e0"/><rect x="15" y="161" width="1" height="1" fill="#e0e0e0"/><rect x="415" y="161" width="1" height="1" fill="#e0e0e0"/><rect x="15" y="164" width="1" height="1" fill="#e0e0e0"/><rect x="415" y="164" width="1" height="1" fill="#e0e0e0"/><rect x="15" y="167" width="1" height="1" fill="#e0e0e0"/><rect x="415" y="167" width="1" height="1" fill="#e0e0e0"/><rect x="15" y="170" width="1" height="1" fill="#e0e0e0"/><rect x="415" y="170" width="1" height="1" fill="#e0e0e0"/><rect x="15" y="173" width="1" height="1" fill="#e0e0e0"/><rect x="415" y="173" width="1" height="1" fill="#e0e0e0"/><rect x="15" y="176" width="1" height="1" fill="#e0e0e0"/><rect x="415" y="176" width="1" height="1" fill="#e0e0e0"/><rect x="15" y="179" width="1" height="1" fill="#e0e0e0"/><rect x="415" y="179" width="1" height="1" fill="#e0e0e0"/><rect x="15" y="182" width="1" height="1" fill="#e0e0e0"/><rect x="415" y="182" width="1" height="1" fill="#e0e0e0"/><rect x="15" y="185" width="1" height="1" fill="#e0e0e0"/><rect x="415" y="185" width="1" height="1" fill="#e0e0e0"/><rect x="15" y="188" width="1" height="1" fill="#e0e0e0"/><rect x="415" y="188" width="1" height="1" fill="#e0e0e0"/><rect x="15" y="191" width="1" height="1" fill="#e0e0e0"/><rect x="415" y="191" width="1" height="1" fill="#e0e0e0"/><rect x="15" y="194" width="1" height="1" fill="#e0e0e0"/><rect x="415" y="194" width="1" height="1" fill="#e0e0e0"/><rect x="15" y="197" width="1" height="1" fill="#e0e0e0"/><rect x="415" y="197" width="1" height="1" fill="#e0e0e0"/><rect x="15" y="200" width="1" height="1" fill="#e0e0e0"/><rect x="415" y="200" width="1" height="1" fill="#e0e0e0"/><rect x="15" y="203" width="1" height="1" fill="#e0e0e0"/><rect x="415" y="203" width="1" height="1" fill="#e0e0e0"/><rect x="15" y="206" width="1" height="1" fill="#e0e0e0"/><rect x="415" y="206" width="1" height="1" fill="#e0e0e0"/><rect x="15" y="209" width="1" height="1" fill="#e0e0e0"/><rect x="415" y="209" width="1" height="1" fill="#e0e0e0"/><rect x="15" y="212" width="1" height="1" fill="#e0e0e0"/><rect x="415" y="212" width="1" height="1" fill="#e0e0e0"/><rect x="15" y="215" width="1" height="1" fill="#e0e0e0"/><rect x="415" y="215" width="1" height="1" fill="#e0e0e0"/><rect x="15" y="218" width="1" height="1" fill="#e0e0e0"/><rect x="415" y="218" width="1" height="1" fill="#e0e0e0"/><rect x="15" y="221" width="1" height="1" fill="#e0e0e0"/><rect x="415" y="221" width="1" height="1" fill="#e0e0e0"/><rect x="15" y="224" width="1" height="1" fill="#e0e0e0"/><rect x="415" y="224" width="1" height="1" fill="#e0e0e0"/><rect x="15" y="227" width="1" height="1" fill="#e0e0e0"/><rect x="415" y="227" width="1" height="1" fill="#e0e0e0"/><rect x="15" y="230" width="1" height="1" fill="#e0e0e0"/><rect x="415" y="230" width="1" height="1" fill="#e0e0e0"/><rect x="15" y="233" width="1" height="1" fill="#e0e0e0"/><rect x="415" y="233" width="1" height="1" fill="#e0e0e0"/><rect x="15" y="236" width="1" height="1" fill="#e0e0e0"/><rect x="415" y="236" width="1" height="1" fill="#e0e0e0"/><rect x="15" y="239" width="1" height="1" fill="#e0e0e0"/><rect x="415" y="239" width="1" height="1" fill="#e0e0e0"/><rect x="15" y="242" width="1" height="1" fill="#e0e0e0"/><rect x="415" y="242" width="1" height="1" fill="#e0e0e0"/><rect x="15" y="245" width="1" height="1" fill="#e0e0e0"/><rect x="415" y="245" width="1" height="1" fill="#e0e0e0"/><rect x="15" y="248" width="1" height="1" fill="#e0e0e0"/><rect x="415" y="248" width="1" height="1" fill="#e0e0e0"/><rect x="15" y="251" width="1" height="1" fill="#e0e0e0"/><rect x="415" y="251" width="1" height="1" fill="#e0e0e0"/><rect x="15" y="254" width="1" height="1" fill="#e0e0e0"/><rect x="415" y="254" width="1" height="1" fill="#e0e0e0"/><rect x="15" y="257" width="1" height="1" fill="#e0e0e0"/><rect x="415" y="257" width="1" height="1" fill="#e0e0e0"/><rect x="15" y="260" width="1" height="1" fill="#e0e0e0"/><rect x="415" y="260" width="1" height="1" fill="#e0e0e0"/><rect x="15" y="263" width="1" height="1" fill="#e0e0e0"/><rect x="415" y="263" width="1" height="1" fill="#e0e0e0"/><rect x="15" y="266" width="1" height="1" fill="#e0e0e0"/><rect x="415" y="266" width="1" height="1" fill="#e0e0e0"/><rect x="15" y="269" width="1" height="1" fill="#e0e0e0"/><rect x="415" y="269" width="1" height="1" fill="#e0e0e0"/><rect x="15" y="272" width="1" height="1" fill="#e0e0e0"/><rect x="415" y="272" width="1" height="1" fill="#e0e0e0"/><rect x="15" y="275" width="1" height="1" fill="#e0e0e0"/><rect x="415" y="275" width="1" height="1" fill="#e0e0e0"/><rect x="15" y="278" width="1" height="1" fill="#e0e0e0"/><rect x="415" y="278" width="1" height="1" fill="#e0e0e0"/><rect x="15" y="281" width="1" height="1" fill="#e0e0e0"/><rect x="415" y="281" width="1" height="1" fill="#e0e0e0"/><rect x="15" y="284" width="1" height="1" fill="#e0e0e0"/><rect x="415" y="284" width="1" height="1" fill="#e0e0e0"/><rect x="15" y="287" width="1" height="1" fill="#e0e0e0"/><rect x="415" y="287" width="1" height="1" fill="#e0e0e0"/><rect x="15" y="290" width="1" height="1" fill="#e0e0e0"/><rect x="415" y="290" width="1" height="1" fill="#e0e0e0"/><rect x="15" y="293" width="1" height="1" fill="#e0e0e0"/><rect x="415" y="293" width="1" height="1" fill="#e0e0e0"/><rect x="15" y="296" width="1" height="1" fill="#e0e0e0"/><rect x="415" y="296" width="1" height="1" fill="#e0e0e0"/><rect x="15" y="299" width="1" height="1" fill="#e0e0e0"/><rect x="415" y="299" width="1" height="1" fill="#e0e0e0"/><rect x="15" y="302" width="1" height="1" fill="#e0e0e0"/><rect x="415" y="302" width="1" height="1" fill="#e0e0e0"/><rect x="15" y="305" width="1" height="1" fill="#e0e0e0"/><rect x="415" y="305" width="1" height="1" fill="#e0e0e0"/><rect x="15" y="308" width="1" height="1" fill="#e0e0e0"/><rect x="415" y="308" width="1" height="1" fill="#e0e0e0"/><rect x="15" y="311" width="1" height="1" fill="#e0e0e0"/><rect x="415" y="311" width="1" height="1" fill="#e0e0e0"/><rect x="15" y="314" width="1" height="1" fill="#e0e0e0"/><rect x="415" y="314" width="1" height="1" fill="#e0e0e0"/><rect x="15" y="317" width="1" height="1" fill="#e0e0e0"/><rect x="415" y="317" width="1" height="1" fill="#e0e0e0"/><rect x="15" y="320" width="1" height="1" fill="#e0e0e0"/><rect x="415" y="320" width="1" height="1" fill="#e0e0e0"/><rect x="15" y="323" width="1" height="1" fill="#e0e0e0"/><rect x="415" y="323" width="1" height="1" fill="#e0e0e0"/><rect x="15" y="326" width="1" height="1" fill="#e0e0e0"/><rect x="415" y="326" width="1" height="1" fill="#e0e0e0"/><rect x="15" y="329" width="1" height="1" fill="#e0e0e0"/><rect x="415" y="329" width="1" height="1" fill="#e0e0e0"/><rect x="15" y="332" width="1" height="1" fill="#e0e0e0"/><rect x="415" y="332" width="1" height="1" fill="#e0e0e0"/><rect x="15" y="335" width="1" height="1" fill="#e0e0e0"/><rect x="415" y="335" width="1" height="1" fill="#e0e0e0"/><rect x="15" y="338" width="1" height="1" fill="#e0e0e0"/><rect x="415" y="338" width="1" height="1" fill="#e0e0e0"/><rect x="15" y="341" width="1" height="1" fill="#e0e0e0"/><rect x="415" y="341" width="1" height="1" fill="#e0e0e0"/><rect x="15" y="344" width="1" height="1" fill="#e0e0e0"/><rect x="415" y="344" width="1" height="1" fill="#e0e0e0"/><rect x="15" y="347" width="1" height="1" fill="#e0e0e0"/><rect x="415" y="347" width="1" height="1" fill="#e0e0e0"/><rect x="15" y="350" width="1" height="1" fill="#e0e0e0"/><rect x="415" y="350" width="1" height="1" fill="#e0e0e0"/><rect x="15" y="353" width="1" height="1" fill="#e0e0e0"/><rect x="415" y="353" width="1" height="1" fill="#e0e0e0"/><rect x="15" y="356" width="1" height="1" fill="#e0e0e0"/><rect x="415" y="356" width="1" height="1" fill="#e0e0e0"/><rect x="15" y="359" width="1" height="1" fill="#e0e0e0"/><rect x="415" y="359" width="1" height="1" fill="#e0e0e0"/><rect x="15" y="362" width="1" height="1" fill="#e0e0e0"/><rect x="415" y="362" width="1" height="1" fill="#e0e0e0"/><rect x="15" y="365" width="1" height="1" fill="#e0e0e0"/><rect x="415" y="365" width="1" height="1" fill="#e0e0e0"/><rect x="15" y="368" width="1" height="1" fill="#e0e0e0"/><rect x="415" y="368" width="1" height="1" fill="#e0e0e0"/><rect x="15" y="371" width="1" height="1" fill="#e0e0e0"/><rect x="415" y="371" width="1" height="1" fill="#e0e0e0"/><rect x="15" y="374" width="1" height="1" fill="#e0e0e0"/><rect x="415" y="374" width="1" height="1" fill="#e0e0e0"/><rect x="15" y="377" width="1" height="1" fill="#e0e0e0"/><rect x="415" y="377" width="1" height="1" fill="#e0e0e0"/><rect x="15" y="380" width="1" height="1" fill="#e0e0e0"/><rect x="415" y="380" width="1" height="1" fill="#e0e0e0"/><rect x="15" y="383" width="1" height="1" fill="#e0e0e0"/><rect x="415" y="383" width="1" height="1" fill="#e0e0e0"/><rect x="15" y="386" width="1" height="1" fill="#e0e0e0"/><rect x="415" y="386" width="1" height="1" fill="#e0e0e0"/><rect x="15" y="389" width="1" height="1" fill="#e0e0e0"/><rect x="415" y="389" width="1" height="1" fill="#e0e0e0"/><rect x="15" y="392" width="1" height="1" fill="#e0e0e0"/><rect x="415" y="392" width="1" height="1" fill="#e0e0e0"/><rect x="15" y="395" width="1" height="1" fill="#e0e0e0"/><rect x="415" y="395" width="1" height="1" fill="#e0e0e0"/><rect x="15" y="398" width="1" height="1" fill="#e0e0e0"/><rect x="415" y="398" width="1" height="1" fill="#e0e0e0"/><rect x="15" y="401" width="1" height="1" fill="#e0e0e0"/><rect x="415" y="401" width="1" height="1" fill="#e0e0e0"/><rect x="15" y="404" width="1" height="1" fill="#e0e0e0"/><rect x="415" y="404" width="1" height="1" fill="#e0e0e0"/><rect x="15" y="407" width="1" height="1" fill="#e0e0e0"/><rect x="415" y="407" width="1" height="1" fill="#e0e0e0"/><rect x="15" y="410" width="1" height="1" fill="#e0e0e0"/><rect x="415" y="410" width="1" height="1" fill="#e0e0e0"/><rect x="15" y="413" width="1" height="1" fill="#e0e0e0"/><rect x="415" y="413" width="1" height="1" fill="#e0e0e0"/><rect x="15" y="416" width="1" height="1" fill="#e0e0e0"/><rect x="415" y="416" width="1" height="1" fill="#e0e0e0"/><rect x="15" y="419" width="1" height="1" fill="#e0e0e0"/><rect x="415" y="419" width="1" height="1" fill="#e0e0e0"/><rect x="15" y="422" width="1" height="1" fill="#e0e0e0"/><rect x="415" y="422" width="1" height="1" fill="#e0e0e0"/><rect x="15" y="425" width="1" height="1" fill="#e0e0e0"/><rect x="415" y="425" width="1" height="1" fill="#e0e0e0"/><rect x="15" y="428" width="1" height="1" fill="#e0e0e0"/><rect x="415" y="428" width="1" height="1" fill="#e0e0e0"/><rect x="15" y="431" width="1" height="1" fill="#e0e0e0"/><rect x="415" y="431" width="1" height="1" fill="#e0e0e0"/><rect x="15" y="434" width="1" height="1" fill="#e0e0e0"/><rect x="415" y="434" width="1" height="1" fill="#e0e0e0"/><rect x="15" y="437" width="1" height="1" fill="#e0e0e0"/><rect x="415" y="437" width="1" height="1" fill="#e0e0e0"/><rect x="15" y="440" width="1" height="1" fill="#e0e0e0"/><rect x="415" y="440" width="1" height="1" fill="#e0e0e0"/><rect x="15" y="443" width="1" height="1" fill="#e0e0e0"/><rect x="415" y="443" width="1" height="1" fill="#e0e0e0"/><rect x="15" y="446" width="1" height="1" fill="#e0e0e0"/><rect x="415" y="446" width="1" height="1" fill="#e0e0e0"/><rect x="15" y="449" width="1" height="1" fill="#e0e0e0"/><rect x="415" y="449" width="1" height="1" fill="#e0e0e0"/><rect x="15" y="452" width="1" height="1" fill="#e0e0e0"/><rect x="415" y="452" width="1" height="1" fill="#e0e0e0"/><rect x="15" y="455" width="1" height="1" fill="#e0e0e0"/><rect x="415" y="455" width="1" height="1" fill="#e0e0e0"/><rect x="15" y="458" width="1" height="1" fill="#e0e0e0"/><rect x="415" y="458" width="1" height="1" fill="#e0e0e0"/><rect x="15" y="461" width="1" height="1" fill="#e0e0e0"/><rect x="415" y="461" width="1" height="1" fill="#e0e0e0"/><rect x="15" y="464" width="1" height="1" fill="#e0e0e0"/><rect x="415" y="464" width="1" height="1" fill="#e0e0e0"/><rect x="15" y="467" width="1" height="1" fill="#e0e0e0"/><rect x="415" y="467" width="1" height="1" fill="#e0e0e0"/><rect x="15" y="470" width="1" height="1" fill="#e0e0e0"/><rect x="415" y="470" width="1" height="1" fill="#e0e0e0"/><rect x="15" y="473" width="1" height="1" fill="#e0e0e0"/><rect x="415" y="473" width="1" height="1" fill="#e0e0e0"/><rect x="15" y="476" width="1" height="1" fill="#e0e0e0"/><rect x="415" y="476" width="1" height="1" fill="#e0e0e0"/><rect x="15" y="479" width="1" height="1" fill="#e0e0e0"/><rect x="415" y="479" width="1" height="1" fill="#e0e0e0"/><rect x="15" y="482" width="1" height="1" fill="#e0e0e0"/><rect x="415" y="482" width="1" height="1" fill="#e0e0e0"/><rect x="15" y="485" width="1" height="1" fill="#e0e0e0"/><rect x="415" y="485" width="1" height="1" fill="#e0e0e0"/><rect x="15" y="488" width="1" height="1" fill="#e0e0e0"/><rect x="415" y="488" width="1" height="1" fill="#e0e0e0"/><rect x="15" y="491" width="1" height="1" fill="#e0e0e0"/><rect x="415" y="491" width="1" height="1" fill="#e0e0e0"/><rect x="15" y="494" width="1" height="1" fill="#e0e0e0"/><rect x="415" y="494" width="1" height="1" fill="#e0e0e0"/><rect x="15" y="497" width="1" height="1" fill="#e0e0e0"/><rect x="415" y="497" width="1" height="1" fill="#e0e0e0"/><rect x="15" y="500" width="1" height="1" fill="#e0e0e0"/><rect x="415" y="500" width="1" height="1" fill="#e0e0e0"/><rect x="15" y="503" width="1" height="1" fill="#e0e0e0"/><rect x="415" y="503" width="1" height="1" fill="#e0e0e0"/><rect x="15" y="506" width="1" height="1" fill="#e0e0e0"/><rect x="415" y="506" width="1" height="1" fill="#e0e0e0"/><rect x="15" y="509" width="1" height="1" fill="#e0e0e0"/><rect x="415" y="509" width="1" height="1" fill="#e0e0e0"/><rect x="15" y="512" width="1" height="1" fill="#e0e0e0"/><rect x="415" y="512" width="1" height="1" fill="#e0e0e0"/><rect x="15" y="515" width="1" height="1" fill="#e0e0e0"/><rect x="415" y="515" width="1" height="1" fill="#e0e0e0"/><rect x="15" y="518" width="1" height="1" fill="#e0e0e0"/><rect x="415" y="518" width="1" height="1" fill="#e0e0e0"/><rect x="15" y="521" width="1" height="1" fill="#e0e0e0"/><rect x="415" y="521" width="1" height="1" fill="#e0e0e0"/><rect x="15" y="524" width="1" height="1" fill="#e0e0e0"/><rect x="415" y="524" width="1" height="1" fill="#e0e0e0"/><rect x="15" y="527" width="1" height="1" fill="#e0e0e0"/><rect x="415" y="527" width="1" height="1" fill="#e0e0e0"/><rect x="15" y="530" width="1" height="1" fill="#e0e0e0"/><rect x="415" y="530" width="1" height="1" fill="#e0e0e0"/><rect x="15" y="533" width="1" height="1" fill="#e0e0e0"/><rect x="415" y="533" width="1" height="1" fill="#e0e0e0"/><rect x="15" y="536" width="1" height="1" fill="#e0e0e0"/><rect x="415" y="536" width="1" height="1" fill="#e0e0e0"/><rect x="15" y="539" width="1" height="1" fill="#e0e0e0"/><rect x="415" y="539" width="1" height="1" fill="#e0e0e0"/><rect x="15" y="542" width="1" height="1" fill="#e0e0e0"/><rect x="415" y="542" width="1" height="1" fill="#e0e0e0"/><rect x="15" y="545" width="1" height="1" fill="#e0e0e0"/><rect x="415" y="545" width="1" height="1" fill="#e0e0e0"/><rect x="15" y="548" width="1" height="1" fill="#e0e0e0"/><rect x="415" y="548" width="1" height="1" fill="#e0e0e0"/><rect x="15" y="551" width="1" height="1" fill="#e0e0e0"/><rect x="415" y="551" width="1" height="1" fill="#e0e0e0"/><rect x="15" y="554" width="1" height="1" fill="#e0e0e0"/><rect x="415" y="554" width="1" height="1" fill="#e0e0e0"/><rect x="15" y="557" width="1" height="1" fill="#e0e0e0"/><rect x="415" y="557" width="1" height="1" fill="#e0e0e0"/><rect x="15" y="560" width="1" height="1" fill="#e0e0e0"/><rect x="415" y="560" width="1" height="1" fill="#e0e0e0"/><rect x="15" y="563" width="1" height="1" fill="#e0e0e0"/><rect x="415" y="563" width="1" height="1" fill="#e0e0e0"/><rect x="15" y="566" width="1" height="1" fill="#e0e0e0"/><rect x="415" y="566" width="1" height="1" fill="#e0e0e0"/><rect x="15" y="569" width="1" height="1" fill="#e0e0e0"/><rect x="415" y="569" width="1" height="1" fill="#e0e0e0"/><rect x="15" y="572" width="1" height="1" fill="#e0e0e0"/><rect x="415" y="572" width="1" height="1" fill="#e0e0e0"/><rect x="15" y="575" width="1" height="1" fill="#e0e0e0"/><rect x="415" y="575" width="1" height="1" fill="#e0e0e0"/><rect x="15" y="578" width="1" height="1" fill="#e0e0e0"/><rect x="415" y="578" width="1" height="1" fill="#e0e0e0"/><rect x="15" y="581" width="1" height="1" fill="#e0e0e0"/><rect x="415" y="581" width="1" height="1" fill="#e0e0e0"/><rect x="15" y="584" width="1" height="1" fill="#e0e0e0"/><rect x="415" y="584" width="1" height="1" fill="#e0e0e0"/><rect x="15" y="587" width="1" height="1" fill="#e0e0e0"/><rect x="415" y="587" width="1" height="1" fill="#e0e0e0"/><rect x="15" y="590" width="1" height="1" fill="#e0e0e0"/><rect x="415" y="590" width="1" height="1" fill="#e0e0e0"/><rect x="15" y="593" width="1" height="1" fill="#e0e0e0"/><rect x="415" y="593" width="1" height="1" fill="#e0e0e0"/><rect x="15" y="596" width="1" height="1" fill="#e0e0e0"/><rect x="415" y="596" width="1" height="1" fill="#e0e0e0"/><rect x="15" y="599" width="1" height="1" fill="#e0e0e0"/><rect x="415" y="599" width="1" height="1" fill="#e0e0e0"/><rect x="15" y="602" width="1" height="1" fill="#e0e0e0"/><rect x="415" y="602" width="1" height="1" fill="#e0e0e0"/><rect x="15" y="605" width="1" height="1" fill="#e0e0e0"/><rect x="415" y="605" width="1" height="1" fill="#e0e0e0"/><rect x="15" y="608" width="1" height="1" fill="#e0e0e0"/><rect x="415" y="608" width="1" height="1" fill="#e0e0e0"/><rect x="15" y="611" width="1" height="1" fill="#e0e0e0"/><rect x="415" y="611" width="1" height="1" fill="#e0e0e0"/><rect x="15" y="614" width="1" height="1" fill="#e0e0e0"/><rect x="415" y="614" width="1" height="1" fill="#e0e0e0"/><rect x="15" y="617" width="1" height="1" fill="#e0e0e0"/><rect x="415" y="617" width="1" height="1" fill="#e0e0e0"/><rect x="15" y="620" width="1" height="1" fill="#e0e0e0"/><rect x="415" y="620" width="1" height="1" fill="#e0e0e0"/><rect x="15" y="623" width="1" height="1" fill="#e0e0e0"/><rect x="415" y="623" width="1" height="1" fill="#e0e0e0"/></svg>
<div class="a" style="left:18px;top:141px;width:14px;height:14px;border:1px solid #b8bcc2;background:linear-gradient(#ffffff,#e2e5ea)"><div style="position:absolute;left:3px;top:8px;width:2px;height:2px;background:#444;box-shadow:3px 0 #444,6px 0 #444"></div></div>
<div class="a" style="left:400px;top:141px;width:14px;height:14px;border:1px solid #b8bcc2;background:linear-gradient(#ffffff,#e2e5ea)"><div style="position:absolute;left:3px;top:8px;width:2px;height:2px;background:#444;box-shadow:3px 0 #444,6px 0 #444"></div></div>
<svg class="a" style="left:414.8px;top:179.2px" width="168" height="168" viewBox="414.8 179.2 168 168" font-family="Liberation Sans, sans-serif"><circle cx="498.8" cy="263.2" r="79.89999999999999" fill="#f3f3f3" stroke="#424242" stroke-width="3.3"/><circle cx="498.8" cy="263.2" r="78.0" fill="none" stroke="#9a9a9a" stroke-width="1"/><path d="M572.51 246.86 A75.5 75.5 0 0 1 571.38 284.01" fill="none" stroke="#ffff00" stroke-width="5"/><path d="M571.38 284.01 A75.5 75.5 0 0 1 551.25 317.51" fill="none" stroke="#e00000" stroke-width="5"/><line x1="448.95" y1="313.05" x2="445.77" y2="316.23" stroke="#2a2a2a" stroke-width="1.5"/><line x1="431.56" y1="284.40" x2="427.27" y2="285.75" stroke="#2a2a2a" stroke-width="1.5"/><line x1="429.37" y1="250.96" x2="424.94" y2="250.18" stroke="#2a2a2a" stroke-width="1.5"/><line x1="442.87" y1="220.28" x2="439.30" y2="217.54" stroke="#2a2a2a" stroke-width="1.5"/><line x1="469.01" y1="199.31" x2="467.10" y2="195.23" stroke="#2a2a2a" stroke-width="1.5"/><line x1="501.88" y1="192.77" x2="502.07" y2="188.27" stroke="#2a2a2a" stroke-width="1.5"/><line x1="534.05" y1="202.15" x2="536.30" y2="198.25" stroke="#2a2a2a" stroke-width="1.5"/><line x1="558.26" y1="225.32" x2="562.05" y2="222.90" stroke="#2a2a2a" stroke-width="1.5"/><line x1="569.03" y1="257.06" x2="573.51" y2="256.66" stroke="#2a2a2a" stroke-width="1.5"/><text x="457.3" y="311.2" fill="#333" font-size="11" text-anchor="middle">-40</text><text x="439.3" y="258.7" fill="#333" font-size="11" text-anchor="middle">60</text><text x="474.8" y="215.2" fill="#333" font-size="11" text-anchor="middle">160</text><text x="530.0" y="216.2" fill="#333" font-size="11" text-anchor="middle">260</text><text x="560.0" y="264.2" fill="#333" font-size="11" text-anchor="middle">360</text><text x="498.8" y="235.7" fill="#333" font-size="10" text-anchor="middle">0(°F)</text><text x="499.3" y="248.2" fill="#333" font-size="10" text-anchor="middle">Coolant Temp</text><path d="M431.79 290.88 L432.34 292.17 L509.06 261.78 L512.54 258.45 L511.76 256.61 L506.95 256.81Z" fill="#000078"/></svg>
<div class="a" style="left:423px;top:393px;width:153px;height:228px;background:#efefef;border:1px solid #f8f8f8"></div><div class="a gb" style="left:430px;top:400px;width:67px;height:220px"></div><div class="a gt" style="left:435px;top:394px">Coolant (...</div><div class="a cell" style="left:437px;top:411.0px;width:57px;">14.0</div><div class="a cell" style="left:437px;top:431.8px;width:57px;">32.0</div><div class="a cell" style="left:437px;top:452.5px;width:57px;">50.0</div><div class="a cell" style="left:437px;top:473.2px;width:57px;">68.0</div><div class="a cell" style="left:437px;top:494.0px;width:57px;">86.0</div><div class="a cell" style="left:437px;top:514.8px;width:57px;">104.0</div><div class="a cell" style="left:437px;top:535.5px;width:57px;">122.0</div><div class="a cell" style="left:437px;top:556.2px;width:57px;">140.0</div><div class="a cell" style="left:437px;top:577.0px;width:57px;">158.0</div><div class="a cell" style="left:437px;top:597.8px;width:57px;">176.0</div><div class="a gb" style="left:503px;top:400px;width:67px;height:220px"></div><div class="a gt" style="left:508px;top:394px">Crankin...</div><div class="a cell" style="left:509px;top:411.0px;width:57px;">128</div><div class="a cell" style="left:509px;top:431.8px;width:57px;">116</div><div class="a cell" style="left:509px;top:452.5px;width:57px;">101</div><div class="a cell" style="left:509px;top:473.2px;width:57px;">91</div><div class="a cell" style="left:509px;top:494.0px;width:57px;">80</div><div class="a cell" style="left:509px;top:514.8px;width:57px;">77</div><div class="a cell" style="left:509px;top:535.5px;width:57px;">74</div><div class="a cell" style="left:509px;top:556.2px;width:57px;">70</div><div class="a cell" style="left:509px;top:577.0px;width:57px;">66</div><div class="a cell" style="left:509px;top:597.8px;width:57px;">62</div>
<div class="a btn btnd" style="left:325px;width:62px"></div>
<div class="a btn btnd" style="left:389px;width:62px"></div>
<svg class="a" style="left:325px;top:633px" width="62" height="30" viewBox="325 633 62 30"><g><rect x="345.5" y="637.5" width="11" height="11" fill="#d2d2d2"/><rect x="346.5" y="638.5" width="9" height="9" fill="#c4c4c4"/><path d="M352 643 L356 643 A7 7 0 0 1 363 650 L363 657.5" stroke="#d0d0d0" stroke-width="7" fill="none"/><path d="M352 643 L356 643 A7 7 0 0 1 363 650 L363 657" stroke="#bababa" stroke-width="4.5" fill="none"/></g></svg>
<svg class="a" style="left:389px;top:633px" width="62" height="30" viewBox="389 633 62 30"><g><rect x="419.5" y="637.5" width="11" height="11" fill="#d2d2d2"/><rect x="420.5" y="638.5" width="9" height="9" fill="#c4c4c4"/><path d="M424 643 L420 643 A7 7 0 0 0 413 650 L413 657.5" stroke="#d0d0d0" stroke-width="7" fill="none"/><path d="M424 643 L420 643 A7 7 0 0 0 413 650 L413 657" stroke="#bababa" stroke-width="4.5" fill="none"/></g></svg>
<div class="a btn" style="left:453px;width:62px"><span class="u">B</span>urn</div>
<div class="a btn" style="left:517px;width:62px"><span class="u">C</span>lose</div>
<svg class="a" style="left:600px;top:99px;opacity:0.7" width="16" height="16" viewBox="0 0 16 16"><ellipse cx="8.5" cy="8.5" rx="6" ry="6" fill="#a9c0dc"/><ellipse cx="9" cy="8" rx="3.5" ry="4" fill="#7ea3d6"/><path d="M3.5 11 Q8 15.5 13.5 12" stroke="#6f7f95" stroke-width="1.6" fill="none"/><circle cx="6.5" cy="6.5" r="1.3" fill="#55677f"/><rect x="3" y="2.5" width="4" height="4" fill="#e6ece6" opacity="0.9"/></svg>
<div class="a" style="left:619px;top:100px;font-size:11.3px;color:#5f6d7c;white-space:nowrap">Priming Pulsewidth</div>
<div class="a" style="left:1155px;top:99px;width:26px;height:14px;border:1px solid #9aa8b6;border-radius:3px;background:linear-gradient(#e6edf5,#d3dfeb)"></div><svg class="a" style="left:1162px;top:101px" width="12" height="10"><path d="M2.5 2 L9.5 8 M9.5 2 L2.5 8" stroke="#4a5563" stroke-width="3.4" stroke-linecap="round"/><path d="M2.5 2 L9.5 8 M9.5 2 L2.5 8" stroke="#fff" stroke-width="1.7" stroke-linecap="round"/></svg>
<div class="a" style="left:600px;top:116px;width:581px;height:22px;background:linear-gradient(#fdfdfd 0%,#f7f7f7 50%,#ececec 100%)"></div>
<div class="a wmenu" style="left:605px;top:120px"><span class="u">F</span>ile</div>
<div class="a" style="left:600px;top:626px;width:581px;height:41px;background:#efefef"></div>
<svg class="a" style="left:600px;top:138px" width="581" height="488" viewBox="600 138 581 488" font-family="Liberation Sans, sans-serif"><rect x="600" y="138" width="581" height="488" fill="#000"/><line x1="642.5" y1="160" x2="642.5" y2="594" stroke="#bdbdbd" stroke-width="1"/><text x="646.5" y="606" fill="#e6e6e6" font-size="10" text-anchor="middle">-40.0</text><line x1="687.4" y1="160" x2="687.4" y2="594" stroke="#bdbdbd" stroke-width="1"/><text x="687.4" y="606" fill="#e6e6e6" font-size="10" text-anchor="middle">8.8</text><line x1="732.4" y1="160" x2="732.4" y2="594" stroke="#bdbdbd" stroke-width="1"/><text x="732.4" y="606" fill="#e6e6e6" font-size="10" text-anchor="middle">57.5</text><line x1="777.3" y1="160" x2="777.3" y2="594" stroke="#bdbdbd" stroke-width="1"/><text x="777.3" y="606" fill="#e6e6e6" font-size="10" text-anchor="middle">106.3</text><line x1="822.2" y1="160" x2="822.2" y2="594" stroke="#bdbdbd" stroke-width="1"/><text x="822.2" y="606" fill="#e6e6e6" font-size="10" text-anchor="middle">155.0</text><line x1="867.2" y1="160" x2="867.2" y2="594" stroke="#bdbdbd" stroke-width="1"/><text x="867.2" y="606" fill="#e6e6e6" font-size="10" text-anchor="middle">203.8</text><line x1="912.1" y1="160" x2="912.1" y2="594" stroke="#bdbdbd" stroke-width="1"/><text x="912.1" y="606" fill="#e6e6e6" font-size="10" text-anchor="middle">252.5</text><line x1="957.1" y1="160" x2="957.1" y2="594" stroke="#bdbdbd" stroke-width="1"/><text x="957.1" y="606" fill="#e6e6e6" font-size="10" text-anchor="middle">301.3</text><line x1="1002.0" y1="160" x2="1002.0" y2="594" stroke="#bdbdbd" stroke-width="1"/><text x="989.0" y="606" fill="#e6e6e6" font-size="10" text-anchor="middle">350.0</text><line x1="642.5" y1="594.0" x2="1002" y2="594.0" stroke="#e0e0e0" stroke-width="1"/><text x="641.5" y="593.0" fill="#e6e6e6" font-size="10" text-anchor="end">0.0</text><line x1="642.5" y1="485.5" x2="1002" y2="485.5" stroke="#e0e0e0" stroke-width="1"/><text x="641.5" y="489.5" fill="#e6e6e6" font-size="10" text-anchor="end">5.0</text><line x1="642.5" y1="377.0" x2="1002" y2="377.0" stroke="#e0e0e0" stroke-width="1"/><text x="641.5" y="381.0" fill="#e6e6e6" font-size="10" text-anchor="end">10.0</text><line x1="642.5" y1="268.5" x2="1002" y2="268.5" stroke="#e0e0e0" stroke-width="1"/><text x="641.5" y="272.5" fill="#e6e6e6" font-size="10" text-anchor="end">15.0</text><line x1="642.5" y1="160.0" x2="1002" y2="160.0" stroke="#e0e0e0" stroke-width="1"/><text x="641.5" y="169.0" fill="#e6e6e6" font-size="10" text-anchor="end">20.0</text><text x="808" y="152.8" fill="#fff" font-size="12.2" font-weight="bold" text-anchor="middle">Priming Pulsewidth</text><text x="822" y="618" fill="#fff" font-size="10.5" font-weight="bold" text-anchor="middle">Coolant (°F)</text><text x="611" y="321.0" fill="#fff" font-size="10" font-weight="bold" text-anchor="middle">P</text><text x="611" y="331.2" fill="#fff" font-size="10" font-weight="bold" text-anchor="middle">r</text><text x="611" y="341.4" fill="#fff" font-size="10" font-weight="bold" text-anchor="middle">i</text><text x="611" y="351.6" fill="#fff" font-size="10" font-weight="bold" text-anchor="middle">m</text><text x="611" y="361.8" fill="#fff" font-size="10" font-weight="bold" text-anchor="middle">e</text><text x="611" y="382.2" fill="#fff" font-size="10" font-weight="bold" text-anchor="middle">P</text><text x="611" y="392.4" fill="#fff" font-size="10" font-weight="bold" text-anchor="middle">W</text><text x="611" y="412.8" fill="#fff" font-size="10" font-weight="bold" text-anchor="middle">m</text><text x="611" y="423.0" fill="#fff" font-size="10" font-weight="bold" text-anchor="middle">s</text><clipPath id="c600"><rect x="600" y="138" width="581" height="488"/></clipPath><polyline clip-path="url(#c600)" points="691.5,51.1 708.1,116.2 724.7,159.6 741.3,246.4 757.8,333.2 774.4,420.0 791.0,463.4 807.6,506.8 824.2,506.8 840.8,506.8" fill="none" stroke="#ffff00" stroke-width="2.7"/><circle cx="724.7" cy="159.6" r="3.8" fill="#0000ff"/><circle cx="741.3" cy="246.4" r="3.8" fill="#0000ff"/><circle cx="757.8" cy="333.2" r="4.6" fill="#ff0000"/><circle cx="774.4" cy="420.0" r="3.8" fill="#0000ff"/><circle cx="791.0" cy="463.4" r="3.8" fill="#0000ff"/><circle cx="807.6" cy="506.8" r="3.8" fill="#0000ff"/><circle cx="824.2" cy="506.8" r="3.8" fill="#0000ff"/><circle cx="840.8" cy="506.8" r="3.8" fill="#0000ff"/><rect x="765.5" y="303.5" width="87" height="24" fill="#333" stroke="#6a6a6a"/><text x="767.5" y="313.5" fill="#e4e4e4" font-size="9.2" letter-spacing="0.25">Coolant (°F): 86.0</text><text x="767.5" y="324.5" fill="#e4e4e4" font-size="9.2" letter-spacing="0.25">Prime PW ms: 12.0</text></svg>
<div class="a" style="left:605px;top:141px;width:14px;height:14px;border:1px solid #b8bcc2;background:linear-gradient(#ffffff,#e2e5ea)"><div style="position:absolute;left:3px;top:8px;width:2px;height:2px;background:#444;box-shadow:3px 0 #444,6px 0 #444"></div></div>
<div class="a" style="left:1001px;top:141px;width:14px;height:14px;border:1px solid #b8bcc2;background:linear-gradient(#ffffff,#e2e5ea)"><div style="position:absolute;left:3px;top:8px;width:2px;height:2px;background:#444;box-shadow:3px 0 #444,6px 0 #444"></div></div>
<svg class="a" style="left:1014.8px;top:179.2px" width="168" height="168" viewBox="1014.8 179.2 168 168" font-family="Liberation Sans, sans-serif"><circle cx="1098.8" cy="263.2" r="79.89999999999999" fill="#f3f3f3" stroke="#424242" stroke-width="3.3"/><circle cx="1098.8" cy="263.2" r="78.0" fill="none" stroke="#9a9a9a" stroke-width="1"/><path d="M1172.51 246.86 A75.5 75.5 0 0 1 1171.38 284.01" fill="none" stroke="#ffff00" stroke-width="5"/><path d="M1171.38 284.01 A75.5 75.5 0 0 1 1151.25 317.51" fill="none" stroke="#e00000" stroke-width="5"/><line x1="1048.95" y1="313.05" x2="1045.77" y2="316.23" stroke="#2a2a2a" stroke-width="1.5"/><line x1="1031.56" y1="284.40" x2="1027.27" y2="285.75" stroke="#2a2a2a" stroke-width="1.5"/><line x1="1029.37" y1="250.96" x2="1024.94" y2="250.18" stroke="#2a2a2a" stroke-width="1.5"/><line x1="1042.87" y1="220.28" x2="1039.30" y2="217.54" stroke="#2a2a2a" stroke-width="1.5"/><line x1="1069.01" y1="199.31" x2="1067.10" y2="195.23" stroke="#2a2a2a" stroke-width="1.5"/><line x1="1101.88" y1="192.77" x2="1102.07" y2="188.27" stroke="#2a2a2a" stroke-width="1.5"/><line x1="1134.05" y1="202.15" x2="1136.30" y2="198.25" stroke="#2a2a2a" stroke-width="1.5"/><line x1="1158.26" y1="225.32" x2="1162.05" y2="222.90" stroke="#2a2a2a" stroke-width="1.5"/><line x1="1169.03" y1="257.06" x2="1173.51" y2="256.66" stroke="#2a2a2a" stroke-width="1.5"/><text x="1057.3" y="311.2" fill="#333" font-size="11" text-anchor="middle">-40</text><text x="1039.3" y="258.7" fill="#333" font-size="11" text-anchor="middle">60</text><text x="1074.8" y="215.2" fill="#333" font-size="11" text-anchor="middle">160</text><text x="1130.0" y="216.2" fill="#333" font-size="11" text-anchor="middle">260</text><text x="1160.0" y="264.2" fill="#333" font-size="11" text-anchor="middle">360</text><text x="1098.8" y="235.7" fill="#333" font-size="10" text-anchor="middle">0(°F)</text><text x="1099.3" y="248.2" fill="#333" font-size="10" text-anchor="middle">Coolant Temp</text><path d="M1031.79 290.88 L1032.34 292.17 L1109.06 261.78 L1112.54 258.45 L1111.76 256.61 L1106.95 256.81Z" fill="#000078"/></svg>
<div class="a" style="left:1023px;top:393px;width:153px;height:228px;background:#efefef;border:1px solid #f8f8f8"></div><div class="a gb" style="left:1030px;top:400px;width:67px;height:220px"></div><div class="a gt" style="left:1035px;top:394px">Coolant (...</div><div class="a cell" style="left:1036px;top:411.0px;width:57px;">14.0</div><div class="a cell" style="left:1036px;top:431.8px;width:57px;">32.0</div><div class="a cell" style="left:1036px;top:452.5px;width:57px;">50.0</div><div class="a cell" style="left:1036px;top:473.2px;width:57px;">68.0</div><div class="a cell" style="left:1036px;top:494.0px;width:57px;background:#f00000;color:#a00000;border-color:#d00000;">86.0</div><div class="a cell" style="left:1036px;top:514.8px;width:57px;">104.0</div><div class="a cell" style="left:1036px;top:535.5px;width:57px;">122.0</div><div class="a cell" style="left:1036px;top:556.2px;width:57px;">140.0</div><div class="a cell" style="left:1036px;top:577.0px;width:57px;">158.0</div><div class="a cell" style="left:1036px;top:597.8px;width:57px;">176.0</div><div class="a gb" style="left:1103px;top:400px;width:67px;height:220px"></div><div class="a gt" style="left:1108px;top:394px">Prime P...</div><div class="a cell" style="left:1108px;top:411.0px;width:57px;">25.0</div><div class="a cell" style="left:1108px;top:431.8px;width:57px;">22.0</div><div class="a cell" style="left:1108px;top:452.5px;width:57px;">20.0</div><div class="a cell" style="left:1108px;top:473.2px;width:57px;">16.0</div><div class="a cell" style="left:1108px;top:494.0px;width:57px;background:#f00000;color:#a00000;border-color:#d00000;"><span style="background:#b9c9e6;color:#333">12.0</span></div><div class="a cell" style="left:1108px;top:514.8px;width:57px;">8.0</div><div class="a cell" style="left:1108px;top:535.5px;width:57px;">6.0</div><div class="a cell" style="left:1108px;top:556.2px;width:57px;">4.0</div><div class="a cell" style="left:1108px;top:577.0px;width:57px;">4.0</div><div class="a cell" style="left:1108px;top:597.8px;width:57px;">4.0</div>
<div class="a btn btnd" style="left:924px;width:62px"></div>
<div class="a btn btnd" style="left:988px;width:62px"></div>
<svg class="a" style="left:924px;top:633px" width="62" height="30" viewBox="924 633 62 30"><g><rect x="944.5" y="637.5" width="11" height="11" fill="#d2d2d2"/><rect x="945.5" y="638.5" width="9" height="9" fill="#c4c4c4"/><path d="M951 643 L955 643 A7 7 0 0 1 962 650 L962 657.5" stroke="#d0d0d0" stroke-width="7" fill="none"/><path d="M951 643 L955 643 A7 7 0 0 1 962 650 L962 657" stroke="#bababa" stroke-width="4.5" fill="none"/></g></svg>
<svg class="a" style="left:988px;top:633px" width="62" height="30" viewBox="988 633 62 30"><g><rect x="1018.5" y="637.5" width="11" height="11" fill="#d2d2d2"/><rect x="1019.5" y="638.5" width="9" height="9" fill="#c4c4c4"/><path d="M1023 643 L1019 643 A7 7 0 0 0 1012 650 L1012 657.5" stroke="#d0d0d0" stroke-width="7" fill="none"/><path d="M1023 643 L1019 643 A7 7 0 0 0 1012 650 L1012 657" stroke="#bababa" stroke-width="4.5" fill="none"/></g></svg>
<div class="a btn" style="left:1052px;width:62px"><span class="u">B</span>urn</div>
<div class="a btn" style="left:1116px;width:62px"><span class="u">C</span>lose</div>
<svg class="a" style="left:9px;top:675px" width="148" height="17"><path d="M0.5 -1 L0.5 10 L6 15.5 L107.5 15.5 L107.5 -1" fill="#c6d9ee" stroke="#8f9aa6"/><path d="M108 -1 L108 10 L113 15.5 L145.5 15.5 L145.5 -1" fill="#f0f0f0" stroke="#8f9aa6"/></svg>
<div class="a" style="left:20px;top:676px;font-weight:bold;font-size:11px;color:#4b5563;white-space:nowrap">Main Dashboard</div>
<svg class="a" style="left:128px;top:675px" width="16" height="15"><path d="M2 1 L9 1 L12.5 4.5 L12.5 12.5 L2 12.5Z" fill="#ddd6ec" stroke="#333" stroke-width="1.3"/><path d="M9 1 L9 4.5 L12.5 4.5" fill="none" stroke="#333" stroke-width="1"/><path d="M8 11 L13 6 M10.5 12.5 L14 12.5" stroke="#222" stroke-width="1.6"/></svg>
<div class="a" style="left:7px;top:713px;width:1184px;height:9px;background:linear-gradient(#f8f8f8 0px,#f8f8f8 1px,#e2eaf3 2px,#dae4ef 9px)"></div>
<div class="a" style="left:1190px;top:675px;width:1px;height:20px;background:#c4d2e0"></div>
<div class="a" style="left:1150px;top:695px;width:2px;height:18px;background:#8a9098"></div>
<svg class="a" style="left:1178px;top:702px" width="12" height="11"><rect x="1" y="10" width="1.5" height="1.5" fill="#c0c6ce"/><rect x="4" y="7" width="1.5" height="1.5" fill="#c0c6ce"/><rect x="4" y="10" width="1.5" height="1.5" fill="#c0c6ce"/><rect x="7" y="4" width="1.5" height="1.5" fill="#c0c6ce"/><rect x="7" y="7" width="1.5" height="1.5" fill="#c0c6ce"/><rect x="7" y="10" width="1.5" height="1.5" fill="#c0c6ce"/><rect x="10" y="1" width="1.5" height="1.5" fill="#c0c6ce"/><rect x="10" y="4" width="1.5" height="1.5" fill="#c0c6ce"/><rect x="10" y="7" width="1.5" height="1.5" fill="#c0c6ce"/><rect x="10" y="10" width="1.5" height="1.5" fill="#c0c6ce"/></svg>
<div class="a" style="left:7px;top:695px;width:283px;height:18px;background:#f0f0f0;border-top:2px solid #737b84;border-left:1px solid #8a9098"></div>
<div class="a" style="left:10px;top:699px;font-size:11.5px;color:#111;white-space:nowrap">Street Tune Ready</div>
<div class="a" style="left:7px;top:691px;width:1183px;height:4px;background:linear-gradient(#eef3f8,#dce7f2)"></div>
<div class="a" style="left:290px;top:696px;width:578px;height:17px;background:#e8f6fc;border:1px solid #d0d6dc;border-top-color:#5e666e;border-left-color:#5e666e"></div>
<div class="a" style="left:292px;top:699px;width:575px;height:11px;background:linear-gradient(#3a9cff 0px,#0a7af2 2px,#0a72e8 100%)"></div>
<div class="a" style="left:868px;top:695px;width:282px;height:18px;background:#f0f0f0;border-top:2px solid #737b84;border-left:1px solid #8a9098"></div>
<div class="a" style="left:872px;top:699px;font-size:11.5px;color:#111;white-space:nowrap">CurrentTune.msq</div>
<svg class="a" style="left:1152px;top:697px" width="20" height="16"><circle cx="9" cy="8" r="6.5" fill="none" stroke="#e03030" stroke-width="1.2"/><rect x="3" y="5" width="12" height="7" fill="#3a1010"/></svg>
<div class="a" style="left:0;top:722px;width:1200px;height:28px;background:linear-gradient(#4a4a4a 0px,#7b7e7b 1px,#5a5a5c 13px,#1c1d20 14px,#1b1c1f 28px)"></div>
<svg class="a" style="left:7px;top:717px" width="42" height="33" viewBox="0 0 42 33"><defs><radialGradient id="orb" cx="0.5" cy="0.35" r="0.65"><stop offset="0" stop-color="#8fd0f0"/><stop offset="0.5" stop-color="#2f86c8"/><stop offset="1" stop-color="#0f3d70"/></radialGradient></defs><circle cx="21" cy="21" r="19.5" fill="#141c26"/><circle cx="21" cy="21" r="17.5" fill="url(#orb)"/><path d="M12 9 Q16 6 21 9 L20 17 Q15 14 11 16Z" fill="#e8622a"/><path d="M22 10 Q27 13 33 10 L32 19 Q27 21 21 18Z" fill="#8cc43c"/><path d="M10 17 Q15 15 20 18 L19 27 Q14 24 9 26Z" fill="#3aa8e8"/><path d="M21 19 Q27 22 32 20 L31 29 Q25 31 20 28Z" fill="#f6c828"/><ellipse cx="21" cy="10" rx="12" ry="6" fill="#fff" opacity="0.18"/></svg>
<div class="a" style="left:61px;top:730px;width:15px;height:12px;background:linear-gradient(#6aa8e8,#2a5fb0);border:1px solid #b6c6d6"></div>
<svg class="a" style="left:83px;top:730px" width="14" height="14"><circle cx="7" cy="7" r="6.5" fill="#d83a2e"/><path d="M7 7 L14 8.4 A6.5 6.5 0 0 1 2.8000000000000003 13.2 Z" fill="#f2c530"/><path d="M7 7 L2.8000000000000003 13.2 A6.5 6.5 0 0 1 1.05 3.5 Z" fill="#3a9d4a"/><circle cx="7" cy="7" r="3.15" fill="#fff"/><circle cx="7" cy="7" r="2.24" fill="#3d7ad8"/></svg>
<svg class="a" style="left:104px;top:730px" width="15" height="15"><circle cx="7.5" cy="7.5" r="7" fill="#2d9a4a" stroke="#c8e8d0" stroke-width="1"/><path d="M4.5 4 L4.5 8.5 Q7.5 11 10.5 8.5 L10.5 4" stroke="#fff" stroke-width="2" fill="none"/><path d="M7.5 3 L7.5 13" stroke="#fff" stroke-width="1.6"/></svg>
<div class="a" style="left:136px;top:723px;font-size:13px;font-weight:bold;color:#f4f4f4">»</div>
<div class="a" style="left:152px;top:724px;width:146px;height:24px;border:1px solid #0e0e0e;border-radius:3px;background:linear-gradient(#6a6c6a 0%,#525352 48%,#2a2a2c 52%,#202022 100%);box-shadow:inset 0 0 0 1px #6e6e6e"></div>
<div class="a" style="left:178px;top:730px;font-size:11.2px;color:#f0f0f0;white-space:nowrap">Miata Turbo Forum ...</div>
<svg class="a" style="left:159px;top:729px" width="14" height="14"><circle cx="7" cy="7" r="6.5" fill="#d83a2e"/><path d="M7 7 L14 8.4 A6.5 6.5 0 0 1 2.8000000000000003 13.2 Z" fill="#f2c530"/><path d="M7 7 L2.8000000000000003 13.2 A6.5 6.5 0 0 1 1.05 3.5 Z" fill="#3a9d4a"/><circle cx="7" cy="7" r="3.15" fill="#fff"/><circle cx="7" cy="7" r="2.24" fill="#3d7ad8"/></svg>
<div class="a" style="left:302px;top:724px;width:146px;height:24px;border:1px solid #0e0e0e;border-radius:3px;background:linear-gradient(#2a2a2a 0%,#1c1c1c 48%,#0c0c0c 52%,#101010 100%);box-shadow:inset 0 0 0 1px #5a5a5a"></div>
<div class="a" style="left:330px;top:730px;font-size:11.2px;color:#f0f0f0;white-space:nowrap">TunerStudio MS v2....</div>
<svg class="a" style="left:308px;top:728px;opacity:1" width="16" height="16" viewBox="0 0 16 16"><ellipse cx="8.5" cy="8.5" rx="6" ry="6" fill="#a9c0dc"/><ellipse cx="9" cy="8" rx="3.5" ry="4" fill="#7ea3d6"/><path d="M3.5 11 Q8 15.5 13.5 12" stroke="#6f7f95" stroke-width="1.6" fill="none"/><circle cx="6.5" cy="6.5" r="1.3" fill="#55677f"/><rect x="3" y="2.5" width="4" height="4" fill="#e6ece6" opacity="0.9"/></svg>
<svg class="a" style="left:995px;top:730px" width="10" height="12"><path d="M7.5 1.5 L3 6 L7.5 10.5" stroke="#e8e8e8" stroke-width="2" fill="none"/></svg>
<svg class="a" style="left:1009px;top:726px" width="16" height="16"><rect x="0.5" y="0.5" width="15" height="15" rx="2" fill="#f28a1e"/><rect x="1" y="1" width="14" height="6" fill="#f9b060" opacity="0.6"/><path d="M4 9 L11 9 L10 13 L5 13Z" fill="#fff"/><path d="M11 10 Q13 10 12 12" stroke="#fff" stroke-width="1" fill="none"/><path d="M7 3 Q9 5 7 7 M9 2 Q11 4 9 6" stroke="#fff" stroke-width="0.9" fill="none"/></svg>
<svg class="a" style="left:1026px;top:727px" width="16" height="15"><rect x="0" y="0" width="16" height="15" rx="2" fill="#9e1a1e"/><path d="M2 13 Q6 3 8 2 Q10 3 6 9 Q10 12 14 11" stroke="#fff" stroke-width="1.6" fill="none"/><circle cx="12" cy="4" r="2.5" fill="#d8d8d8"/></svg>
<svg class="a" style="left:1043px;top:727px" width="16" height="15"><rect x="0" y="0" width="8" height="8" fill="#7fba2a"/><rect x="8" y="1" width="8" height="7" fill="#e6a21e"/><rect x="0" y="8" width="8" height="7" fill="#2f9e4a"/><rect x="8" y="8" width="8" height="7" fill="#d03a22"/><rect x="5" y="4" width="6" height="7" fill="#3a6ed0"/></svg>
<svg class="a" style="left:1062px;top:727px" width="16" height="15"><rect x="1.5" y="0.5" width="12" height="14" fill="#a8c8e0" stroke="#d8e4ec"/><rect x="3" y="3" width="9" height="6" fill="#5a9ad0"/><rect x="3" y="10" width="9" height="2" fill="#e0e8f0"/><circle cx="13" cy="4" r="2.5" fill="#e8a050"/></svg>
<svg class="a" style="left:1087px;top:727px" width="15" height="15"><rect x="6.5" y="1.5" width="7" height="12.5" fill="#9ad08a" stroke="#e8e8e8"/><path d="M1 5 L5 5 L5 10 L1 10Z" fill="#f0f0f0"/><path d="M2 3 L2 5 M4 3 L4 5" stroke="#f0f0f0" stroke-width="1"/></svg>
<svg class="a" style="left:1104px;top:727px" width="16" height="16"><rect x="0.5" y="3.5" width="9" height="7" fill="#2c78c8" stroke="#c8dcf0"/><rect x="5.5" y="0.5" width="9" height="7" fill="#3a8ad8" stroke="#c8dcf0"/><circle cx="11" cy="12" r="3.5" fill="#1aa8b8"/></svg>
<svg class="a" style="left:1121px;top:728px" width="16" height="14"><path d="M1 5 L4 5 L8 1 L8 13 L4 9 L1 9Z" fill="#e8e8e8"/><path d="M10 4.5 Q11.8 7 10 9.5 M12 2.5 Q15 7 12 11.5" stroke="#5cb85c" stroke-width="1.3" fill="none"/></svg>
<div class="a" style="left:1144px;top:730px;font-size:11px;color:#f0f0f0;white-space:nowrap">5:46 PM</div>
</body></html>
